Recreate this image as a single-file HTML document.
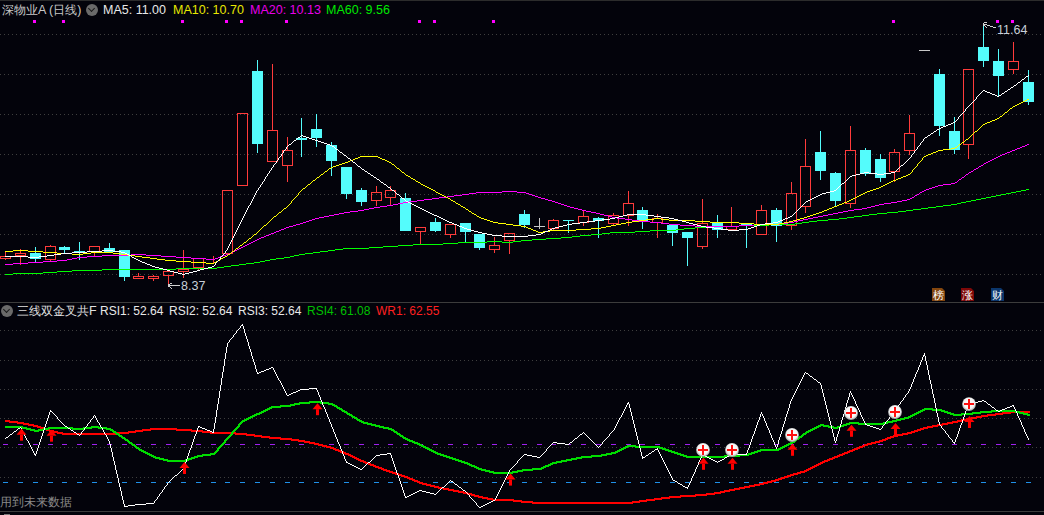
<!DOCTYPE html>
<html><head><meta charset="utf-8">
<style>
html,body{margin:0;padding:0;background:#03030b;}
#wrap{position:relative;width:1044px;height:515px;overflow:hidden;background:#03030b;font-family:"Liberation Sans",sans-serif;}
svg{position:absolute;left:0;top:0;}
.t{position:absolute;white-space:nowrap;font-size:12.5px;line-height:14px;}
.ic{position:absolute;width:12px;height:12px;border-radius:50%;background:#6a6a6a;}
.ic:after{content:"";position:absolute;left:3px;top:2px;width:4px;height:4px;border-right:1.5px solid #1a1a1a;border-bottom:1.5px solid #1a1a1a;transform:rotate(45deg);}
.cj{font-size:11.5px;}
.bx{position:absolute;width:13px;height:13px;color:#fff;font-size:11px;line-height:14px;text-align:center;clip-path:polygon(0 0,10px 0,13px 3px,13px 13px,0 13px);}
</style></head><body><div id="wrap">
<svg width="1044" height="515" viewBox="0 0 1044 515">
<defs><radialGradient id="cg" cx="50%" cy="45%" r="55%"><stop offset="0" stop-color="#ffffff"/><stop offset="0.7" stop-color="#f4f4f4"/><stop offset="1" stop-color="#9a9a9a"/></radialGradient></defs>
<line x1="0" y1="34.5" x2="1044" y2="34.5" stroke="#3e3e3e" stroke-width="1" stroke-dasharray="1 3"/>
<line x1="0" y1="74.5" x2="1044" y2="74.5" stroke="#3e3e3e" stroke-width="1" stroke-dasharray="1 3"/>
<line x1="0" y1="114.5" x2="1044" y2="114.5" stroke="#3e3e3e" stroke-width="1" stroke-dasharray="1 3"/>
<line x1="0" y1="154.5" x2="1044" y2="154.5" stroke="#3e3e3e" stroke-width="1" stroke-dasharray="1 3"/>
<line x1="0" y1="194.5" x2="1044" y2="194.5" stroke="#3e3e3e" stroke-width="1" stroke-dasharray="1 3"/>
<line x1="0" y1="234.5" x2="1044" y2="234.5" stroke="#3e3e3e" stroke-width="1" stroke-dasharray="1 3"/>
<line x1="0" y1="274.5" x2="1044" y2="274.5" stroke="#3e3e3e" stroke-width="1" stroke-dasharray="1 3"/>
<line x1="0" y1="330.5" x2="1044" y2="330.5" stroke="#3e3e3e" stroke-width="1" stroke-dasharray="1 3"/>
<line x1="0" y1="360.5" x2="1044" y2="360.5" stroke="#3e3e3e" stroke-width="1" stroke-dasharray="1 3"/>
<line x1="0" y1="389.5" x2="1044" y2="389.5" stroke="#3e3e3e" stroke-width="1" stroke-dasharray="1 3"/>
<line x1="0" y1="418.5" x2="1044" y2="418.5" stroke="#3e3e3e" stroke-width="1" stroke-dasharray="1 3"/>
<line x1="0" y1="447.5" x2="1044" y2="447.5" stroke="#3e3e3e" stroke-width="1" stroke-dasharray="1 3"/>
<line x1="0" y1="477.5" x2="1044" y2="477.5" stroke="#3e3e3e" stroke-width="1" stroke-dasharray="1 3"/>
<rect x="0" y="0" width="1044" height="1" fill="#2c2c2c"/>
<rect x="0" y="302" width="1044" height="1" fill="#3c3c3c"/>
<rect x="0" y="511" width="1044" height="1" fill="#3c3c3c"/>
<rect x="4" y="514" width="6" height="1" fill="#7a7a7a"/>
<rect x="5" y="252" width="1" height="4" fill="#ff3b3b"/>
<rect x="5" y="259" width="1" height="1" fill="#ff3b3b"/>
<rect x="0.5" y="256.5" width="10" height="2" fill="none" stroke="#ff3b3b" stroke-width="1"/>
<rect x="20" y="249" width="1" height="4" fill="#ff3b3b"/>
<rect x="20" y="256" width="1" height="9" fill="#ff3b3b"/>
<rect x="15.5" y="253.5" width="10" height="2" fill="none" stroke="#ff3b3b" stroke-width="1"/>
<rect x="35" y="247" width="1" height="6" fill="#54fcfc"/>
<rect x="35" y="259" width="1" height="3" fill="#54fcfc"/>
<rect x="30" y="253" width="11" height="6" fill="#54fcfc"/>
<rect x="50" y="245" width="1" height="1" fill="#ff3b3b"/>
<rect x="50" y="260" width="1" height="2" fill="#ff3b3b"/>
<rect x="45.5" y="246.5" width="10" height="13" fill="none" stroke="#ff3b3b" stroke-width="1"/>
<rect x="64" y="246" width="1" height="1" fill="#54fcfc"/>
<rect x="64" y="250" width="1" height="3" fill="#54fcfc"/>
<rect x="59" y="247" width="11" height="3" fill="#54fcfc"/>
<rect x="79" y="242" width="1" height="9" fill="#54fcfc"/>
<rect x="79" y="252" width="1" height="8" fill="#54fcfc"/>
<rect x="74" y="251" width="11" height="1" fill="#54fcfc"/>
<rect x="94" y="252" width="1" height="4" fill="#ff3b3b"/>
<rect x="89.5" y="246.5" width="10" height="5" fill="none" stroke="#ff3b3b" stroke-width="1"/>
<rect x="109" y="243" width="1" height="5" fill="#54fcfc"/>
<rect x="109" y="252" width="1" height="1" fill="#54fcfc"/>
<rect x="104" y="248" width="11" height="4" fill="#54fcfc"/>
<rect x="124" y="277" width="1" height="4" fill="#54fcfc"/>
<rect x="119" y="250" width="11" height="27" fill="#54fcfc"/>
<rect x="138" y="273" width="1" height="3" fill="#ff3b3b"/>
<rect x="133.5" y="276.5" width="10" height="2" fill="none" stroke="#ff3b3b" stroke-width="1"/>
<rect x="153" y="275" width="1" height="1" fill="#ff3b3b"/>
<rect x="153" y="279" width="1" height="2" fill="#ff3b3b"/>
<rect x="148.5" y="276.5" width="10" height="2" fill="none" stroke="#ff3b3b" stroke-width="1"/>
<rect x="168" y="276" width="1" height="9" fill="#ff3b3b"/>
<rect x="163.5" y="271.5" width="10" height="4" fill="none" stroke="#ff3b3b" stroke-width="1"/>
<rect x="183" y="250" width="1" height="19" fill="#ff3b3b"/>
<rect x="183" y="272" width="1" height="6" fill="#ff3b3b"/>
<rect x="178.5" y="269.5" width="10" height="2" fill="none" stroke="#ff3b3b" stroke-width="1"/>
<rect x="198" y="268" width="1" height="2" fill="#ff3b3b"/>
<rect x="193.5" y="258.5" width="10" height="9" fill="none" stroke="#ff3b3b" stroke-width="1"/>
<rect x="213" y="256" width="1" height="3" fill="#ff3b3b"/>
<rect x="213" y="260" width="1" height="4" fill="#ff3b3b"/>
<rect x="208.5" y="259.5" width="10" height="0" fill="none" stroke="#ff3b3b" stroke-width="1"/>
<rect x="222.5" y="190.5" width="10" height="63" fill="none" stroke="#ff3b3b" stroke-width="1"/>
<rect x="237.5" y="113.5" width="10" height="72" fill="none" stroke="#ff3b3b" stroke-width="1"/>
<rect x="257" y="60" width="1" height="11" fill="#54fcfc"/>
<rect x="257" y="144" width="1" height="9" fill="#54fcfc"/>
<rect x="252" y="71" width="11" height="73" fill="#54fcfc"/>
<rect x="272" y="64" width="1" height="66" fill="#ff3b3b"/>
<rect x="267.5" y="130.5" width="10" height="31" fill="none" stroke="#ff3b3b" stroke-width="1"/>
<rect x="287" y="137" width="1" height="13" fill="#ff3b3b"/>
<rect x="287" y="166" width="1" height="16" fill="#ff3b3b"/>
<rect x="282.5" y="150.5" width="10" height="15" fill="none" stroke="#ff3b3b" stroke-width="1"/>
<rect x="301" y="118" width="1" height="20" fill="#54fcfc"/>
<rect x="301" y="140" width="1" height="17" fill="#54fcfc"/>
<rect x="296" y="138" width="11" height="2" fill="#54fcfc"/>
<rect x="316" y="114" width="1" height="15" fill="#54fcfc"/>
<rect x="316" y="138" width="1" height="9" fill="#54fcfc"/>
<rect x="311" y="129" width="11" height="9" fill="#54fcfc"/>
<rect x="331" y="142" width="1" height="3" fill="#54fcfc"/>
<rect x="331" y="161" width="1" height="15" fill="#54fcfc"/>
<rect x="326" y="145" width="11" height="16" fill="#54fcfc"/>
<rect x="346" y="194" width="1" height="5" fill="#54fcfc"/>
<rect x="341" y="167" width="11" height="27" fill="#54fcfc"/>
<rect x="361" y="188" width="1" height="2" fill="#54fcfc"/>
<rect x="361" y="202" width="1" height="4" fill="#54fcfc"/>
<rect x="356" y="190" width="11" height="12" fill="#54fcfc"/>
<rect x="376" y="186" width="1" height="6" fill="#ff3b3b"/>
<rect x="376" y="201" width="1" height="5" fill="#ff3b3b"/>
<rect x="371.5" y="192.5" width="10" height="8" fill="none" stroke="#ff3b3b" stroke-width="1"/>
<rect x="390" y="186" width="1" height="4" fill="#ff3b3b"/>
<rect x="390" y="198" width="1" height="7" fill="#ff3b3b"/>
<rect x="385.5" y="190.5" width="10" height="7" fill="none" stroke="#ff3b3b" stroke-width="1"/>
<rect x="405" y="193" width="1" height="5" fill="#54fcfc"/>
<rect x="400" y="198" width="11" height="33" fill="#54fcfc"/>
<rect x="420" y="232" width="1" height="12" fill="#ff3b3b"/>
<rect x="415.5" y="227.5" width="10" height="4" fill="none" stroke="#ff3b3b" stroke-width="1"/>
<rect x="435" y="218" width="1" height="4" fill="#54fcfc"/>
<rect x="435" y="231" width="1" height="1" fill="#54fcfc"/>
<rect x="430" y="222" width="11" height="9" fill="#54fcfc"/>
<rect x="450" y="235" width="1" height="3" fill="#ff3b3b"/>
<rect x="445.5" y="224.5" width="10" height="10" fill="none" stroke="#ff3b3b" stroke-width="1"/>
<rect x="465" y="232" width="1" height="10" fill="#54fcfc"/>
<rect x="460" y="223" width="11" height="9" fill="#54fcfc"/>
<rect x="479" y="248" width="1" height="2" fill="#54fcfc"/>
<rect x="474" y="234" width="11" height="14" fill="#54fcfc"/>
<rect x="494" y="237" width="1" height="8" fill="#ff3b3b"/>
<rect x="494" y="250" width="1" height="3" fill="#ff3b3b"/>
<rect x="489.5" y="245.5" width="10" height="4" fill="none" stroke="#ff3b3b" stroke-width="1"/>
<rect x="509" y="241" width="1" height="13" fill="#ff3b3b"/>
<rect x="504.5" y="233.5" width="10" height="7" fill="none" stroke="#ff3b3b" stroke-width="1"/>
<rect x="524" y="210" width="1" height="4" fill="#54fcfc"/>
<rect x="524" y="225" width="1" height="3" fill="#54fcfc"/>
<rect x="519" y="214" width="11" height="11" fill="#54fcfc"/>
<rect x="534" y="226" width="11" height="1" fill="#c8c8c8"/>
<rect x="539" y="218" width="1" height="11" fill="#c8c8c8"/>
<rect x="553" y="219" width="1" height="1" fill="#ff3b3b"/>
<rect x="553" y="229" width="1" height="1" fill="#ff3b3b"/>
<rect x="548.5" y="220.5" width="10" height="8" fill="none" stroke="#ff3b3b" stroke-width="1"/>
<rect x="568" y="221" width="1" height="12" fill="#54fcfc"/>
<rect x="563" y="220" width="11" height="1" fill="#54fcfc"/>
<rect x="583" y="211" width="1" height="5" fill="#ff3b3b"/>
<rect x="583" y="223" width="1" height="3" fill="#ff3b3b"/>
<rect x="578.5" y="216.5" width="10" height="6" fill="none" stroke="#ff3b3b" stroke-width="1"/>
<rect x="598" y="217" width="1" height="1" fill="#54fcfc"/>
<rect x="598" y="221" width="1" height="17" fill="#54fcfc"/>
<rect x="593" y="218" width="11" height="3" fill="#54fcfc"/>
<rect x="613" y="213" width="1" height="2" fill="#ff3b3b"/>
<rect x="613" y="224" width="1" height="1" fill="#ff3b3b"/>
<rect x="608.5" y="215.5" width="10" height="8" fill="none" stroke="#ff3b3b" stroke-width="1"/>
<rect x="628" y="191" width="1" height="12" fill="#ff3b3b"/>
<rect x="628" y="216" width="1" height="10" fill="#ff3b3b"/>
<rect x="623.5" y="203.5" width="10" height="12" fill="none" stroke="#ff3b3b" stroke-width="1"/>
<rect x="642" y="207" width="1" height="3" fill="#54fcfc"/>
<rect x="642" y="221" width="1" height="8" fill="#54fcfc"/>
<rect x="637" y="210" width="11" height="11" fill="#54fcfc"/>
<rect x="657" y="214" width="1" height="4" fill="#ff3b3b"/>
<rect x="657" y="223" width="1" height="15" fill="#ff3b3b"/>
<rect x="652.5" y="218.5" width="10" height="4" fill="none" stroke="#ff3b3b" stroke-width="1"/>
<rect x="672" y="233" width="1" height="13" fill="#54fcfc"/>
<rect x="667" y="225" width="11" height="8" fill="#54fcfc"/>
<rect x="687" y="238" width="1" height="28" fill="#54fcfc"/>
<rect x="682" y="232" width="11" height="6" fill="#54fcfc"/>
<rect x="702" y="199" width="1" height="24" fill="#ff3b3b"/>
<rect x="702" y="247" width="1" height="2" fill="#ff3b3b"/>
<rect x="697.5" y="223.5" width="10" height="23" fill="none" stroke="#ff3b3b" stroke-width="1"/>
<rect x="717" y="215" width="1" height="8" fill="#54fcfc"/>
<rect x="717" y="230" width="1" height="8" fill="#54fcfc"/>
<rect x="712" y="223" width="11" height="7" fill="#54fcfc"/>
<rect x="731" y="207" width="1" height="19" fill="#ff3b3b"/>
<rect x="731" y="230" width="1" height="1" fill="#ff3b3b"/>
<rect x="726.5" y="226.5" width="10" height="3" fill="none" stroke="#ff3b3b" stroke-width="1"/>
<rect x="746" y="226" width="1" height="22" fill="#54fcfc"/>
<rect x="741" y="224" width="11" height="2" fill="#54fcfc"/>
<rect x="761" y="205" width="1" height="5" fill="#ff3b3b"/>
<rect x="756.5" y="210.5" width="10" height="24" fill="none" stroke="#ff3b3b" stroke-width="1"/>
<rect x="776" y="208" width="1" height="2" fill="#54fcfc"/>
<rect x="776" y="226" width="1" height="16" fill="#54fcfc"/>
<rect x="771" y="210" width="11" height="16" fill="#54fcfc"/>
<rect x="791" y="182" width="1" height="11" fill="#ff3b3b"/>
<rect x="791" y="226" width="1" height="4" fill="#ff3b3b"/>
<rect x="786.5" y="193.5" width="10" height="32" fill="none" stroke="#ff3b3b" stroke-width="1"/>
<rect x="805" y="139" width="1" height="27" fill="#ff3b3b"/>
<rect x="805" y="207" width="1" height="6" fill="#ff3b3b"/>
<rect x="800.5" y="166.5" width="10" height="40" fill="none" stroke="#ff3b3b" stroke-width="1"/>
<rect x="820" y="131" width="1" height="21" fill="#54fcfc"/>
<rect x="820" y="171" width="1" height="9" fill="#54fcfc"/>
<rect x="815" y="152" width="11" height="19" fill="#54fcfc"/>
<rect x="835" y="172" width="1" height="1" fill="#54fcfc"/>
<rect x="835" y="201" width="1" height="5" fill="#54fcfc"/>
<rect x="830" y="173" width="11" height="28" fill="#54fcfc"/>
<rect x="850" y="126" width="1" height="24" fill="#ff3b3b"/>
<rect x="850" y="204" width="1" height="4" fill="#ff3b3b"/>
<rect x="845.5" y="150.5" width="10" height="53" fill="none" stroke="#ff3b3b" stroke-width="1"/>
<rect x="865" y="148" width="1" height="2" fill="#54fcfc"/>
<rect x="865" y="174" width="1" height="2" fill="#54fcfc"/>
<rect x="860" y="150" width="11" height="24" fill="#54fcfc"/>
<rect x="880" y="154" width="1" height="5" fill="#54fcfc"/>
<rect x="880" y="178" width="1" height="4" fill="#54fcfc"/>
<rect x="875" y="159" width="11" height="19" fill="#54fcfc"/>
<rect x="894" y="149" width="1" height="3" fill="#ff3b3b"/>
<rect x="894" y="172" width="1" height="10" fill="#ff3b3b"/>
<rect x="889.5" y="152.5" width="10" height="19" fill="none" stroke="#ff3b3b" stroke-width="1"/>
<rect x="909" y="115" width="1" height="18" fill="#ff3b3b"/>
<rect x="909" y="151" width="1" height="4" fill="#ff3b3b"/>
<rect x="904.5" y="133.5" width="10" height="17" fill="none" stroke="#ff3b3b" stroke-width="1"/>
<rect x="919" y="50" width="11" height="1" fill="#c8c8c8"/>
<rect x="939" y="69" width="1" height="5" fill="#54fcfc"/>
<rect x="939" y="126" width="1" height="10" fill="#54fcfc"/>
<rect x="934" y="74" width="11" height="52" fill="#54fcfc"/>
<rect x="954" y="117" width="1" height="14" fill="#54fcfc"/>
<rect x="954" y="150" width="1" height="4" fill="#54fcfc"/>
<rect x="949" y="131" width="11" height="19" fill="#54fcfc"/>
<rect x="968" y="145" width="1" height="14" fill="#ff3b3b"/>
<rect x="963.5" y="69.5" width="10" height="75" fill="none" stroke="#ff3b3b" stroke-width="1"/>
<rect x="983" y="24" width="1" height="23" fill="#54fcfc"/>
<rect x="983" y="61" width="1" height="6" fill="#54fcfc"/>
<rect x="978" y="47" width="11" height="14" fill="#54fcfc"/>
<rect x="998" y="49" width="1" height="12" fill="#54fcfc"/>
<rect x="998" y="76" width="1" height="20" fill="#54fcfc"/>
<rect x="993" y="61" width="11" height="15" fill="#54fcfc"/>
<rect x="1013" y="42" width="1" height="19" fill="#ff3b3b"/>
<rect x="1013" y="70" width="1" height="4" fill="#ff3b3b"/>
<rect x="1008.5" y="61.5" width="10" height="8" fill="none" stroke="#ff3b3b" stroke-width="1"/>
<rect x="1028" y="70" width="1" height="12" fill="#54fcfc"/>
<rect x="1028" y="102" width="1" height="3" fill="#54fcfc"/>
<rect x="1023" y="82" width="11" height="20" fill="#54fcfc"/>
<path d="M1026 189h3v1h-3zM1021 190h5v1h-5zM1016 191h5v1h-5zM1011 192h5v1h-5zM1006 193h5v1h-5zM1001 194h5v1h-5zM996 195h5v1h-5zM991 196h5v1h-5zM986 197h5v1h-5zM981 198h5v1h-5zM976 199h5v1h-5zM971 200h5v1h-5zM966 201h5v1h-5zM961 202h5v1h-5zM957 203h4v1h-4zM951 204h6v1h-6zM943 205h8v1h-8zM936 206h7v1h-7zM928 207h8v1h-8zM921 208h7v1h-7zM913 209h8v1h-8zM906 210h7v1h-7zM898 211h8v1h-8zM887 212h11v1h-11zM877 213h10v1h-10zM869 214h8v1h-8zM862 215h7v1h-7zM854 216h8v1h-8zM847 217h7v1h-7zM839 218h8v1h-8zM828 219h11v1h-11zM817 220h11v1h-11zM809 221h8v1h-8zM802 222h7v1h-7zM795 223h7v1h-7zM769 224h26v1h-26zM739 225h30v1h-30zM710 226h29v1h-29zM695 227h15v1h-15zM684 228h11v1h-11zM676 229h8v1h-8zM650 230h26v1h-26zM635 231h15v1h-15zM610 232h25v1h-25zM602 233h8v1h-8zM591 234h11v1h-11zM580 235h11v1h-11zM572 236h8v1h-8zM561 237h11v1h-11zM546 238h15v1h-15zM532 239h14v1h-14zM521 240h11v1h-11zM487 241h15v1h-15zM513 241h8v1h-8zM458 242h29v1h-29zM502 242h11v1h-11zM443 243h15v1h-15zM413 244h30v1h-30zM398 245h15v1h-15zM383 246h15v1h-15zM369 247h14v1h-14zM343 248h26v1h-26zM335 249h8v1h-8zM328 250h7v1h-7zM320 251h8v1h-8zM313 252h7v1h-7zM305 253h8v1h-8zM299 254h6v1h-6zM294 255h5v1h-5zM290 256h4v1h-4zM284 257h6v1h-6zM276 258h8v1h-8zM270 259h6v1h-6zM265 260h5v1h-5zM260 261h5v1h-5zM254 262h6v1h-6zM246 263h8v1h-8zM239 264h7v1h-7zM231 265h8v1h-8zM224 266h7v1h-7zM217 267h7v1h-7zM176 268h41v1h-41zM102 269h74v1h-74zM72 270h30v1h-30zM57 271h15v1h-15zM43 272h14v1h-14zM13 273h30v1h-30zM5 274h8v1h-8z" fill="#00ff00"/>
<path d="M1027 144h2v1h-2zM1025 145h2v1h-2zM1022 146h3v1h-3zM1020 147h2v1h-2zM1017 148h3v1h-3zM1015 149h2v1h-2zM1012 150h3v1h-3zM1010 151h2v1h-2zM1007 152h3v1h-3zM1005 153h2v1h-2zM1002 154h3v1h-3zM1000 155h2v1h-2zM998 156h2v1h-2zM996 157h2v1h-2zM994 158h2v1h-2zM992 159h2v1h-2zM990 160h2v1h-2zM988 161h2v1h-2zM986 162h2v1h-2zM984 163h2v1h-2zM983 164h1v1h-1zM981 165h2v1h-2zM979 166h2v1h-2zM978 167h1v1h-1zM976 168h2v1h-2zM974 169h2v1h-2zM973 170h1v1h-1zM971 171h2v1h-2zM969 172h2v1h-2zM968 173h1v1h-1zM966 174h2v1h-2zM965 175h1v1h-1zM964 176h1v1h-1zM962 177h2v1h-2zM961 178h1v1h-1zM959 179h2v1h-2zM958 180h1v1h-1zM957 181h1v1h-1zM955 182h2v1h-2zM951 183h4v1h-4zM943 184h8v1h-8zM938 185h5v1h-5zM935 186h3v1h-3zM932 187h3v1h-3zM929 188h3v1h-3zM926 189h3v1h-3zM924 190h2v1h-2zM502 191h15v1h-15zM922 191h2v1h-2zM476 192h26v1h-26zM517 192h9v1h-9zM920 192h2v1h-2zM469 193h7v1h-7zM526 193h3v1h-3zM919 193h1v1h-1zM462 194h7v1h-7zM529 194h3v1h-3zM917 194h2v1h-2zM454 195h8v1h-8zM532 195h3v1h-3zM915 195h2v1h-2zM447 196h7v1h-7zM535 196h3v1h-3zM914 196h1v1h-1zM439 197h8v1h-8zM538 197h3v1h-3zM912 197h2v1h-2zM432 198h7v1h-7zM541 198h4v1h-4zM910 198h2v1h-2zM424 199h8v1h-8zM545 199h3v1h-3zM907 199h3v1h-3zM417 200h7v1h-7zM548 200h4v1h-4zM902 200h5v1h-5zM409 201h8v1h-8zM552 201h3v1h-3zM897 201h5v1h-5zM403 202h6v1h-6zM555 202h3v1h-3zM891 202h6v1h-6zM398 203h5v1h-5zM558 203h3v1h-3zM884 203h7v1h-7zM393 204h5v1h-5zM561 204h3v1h-3zM879 204h5v1h-5zM387 205h6v1h-6zM564 205h3v1h-3zM875 205h4v1h-4zM380 206h7v1h-7zM567 206h3v1h-3zM871 206h4v1h-4zM374 207h6v1h-6zM570 207h4v1h-4zM867 207h4v1h-4zM369 208h5v1h-5zM574 208h4v1h-4zM862 208h5v1h-5zM364 209h5v1h-5zM578 209h4v1h-4zM854 209h8v1h-8zM358 210h6v1h-6zM582 210h4v1h-4zM848 210h6v1h-6zM350 211h8v1h-8zM586 211h5v1h-5zM843 211h5v1h-5zM344 212h6v1h-6zM591 212h5v1h-5zM838 212h5v1h-5zM339 213h5v1h-5zM596 213h4v1h-4zM833 213h5v1h-5zM334 214h5v1h-5zM600 214h4v1h-4zM828 214h5v1h-5zM329 215h5v1h-5zM604 215h4v1h-4zM823 215h5v1h-5zM324 216h5v1h-5zM608 216h4v1h-4zM818 216h5v1h-5zM319 217h5v1h-5zM612 217h5v1h-5zM813 217h5v1h-5zM315 218h4v1h-4zM617 218h8v1h-8zM808 218h5v1h-5zM312 219h3v1h-3zM625 219h7v1h-7zM803 219h5v1h-5zM309 220h3v1h-3zM632 220h7v1h-7zM798 220h5v1h-5zM306 221h3v1h-3zM639 221h11v1h-11zM794 221h4v1h-4zM303 222h3v1h-3zM650 222h11v1h-11zM788 222h6v1h-6zM300 223h3v1h-3zM661 223h8v1h-8zM780 223h8v1h-8zM296 224h4v1h-4zM669 224h11v1h-11zM754 224h26v1h-26zM293 225h3v1h-3zM680 225h15v1h-15zM739 225h15v1h-15zM289 226h4v1h-4zM695 226h44v1h-44zM286 227h3v1h-3zM284 228h2v1h-2zM281 229h3v1h-3zM279 230h2v1h-2zM276 231h3v1h-3zM274 232h2v1h-2zM271 233h3v1h-3zM269 234h2v1h-2zM266 235h3v1h-3zM264 236h2v1h-2zM261 237h3v1h-3zM259 238h2v1h-2zM257 239h2v1h-2zM255 240h2v1h-2zM253 241h2v1h-2zM251 242h2v1h-2zM249 243h2v1h-2zM247 244h2v1h-2zM245 245h2v1h-2zM243 246h2v1h-2zM241 247h2v1h-2zM239 248h2v1h-2zM237 249h2v1h-2zM235 250h2v1h-2zM233 251h2v1h-2zM231 252h2v1h-2zM229 253h2v1h-2zM131 254h15v1h-15zM226 254h3v1h-3zM102 255h29v1h-29zM146 255h15v1h-15zM223 255h3v1h-3zM87 256h15v1h-15zM161 256h15v1h-15zM220 256h3v1h-3zM77 257h10v1h-10zM176 257h15v1h-15zM218 257h2v1h-2zM72 258h5v1h-5zM191 258h15v1h-15zM215 258h3v1h-3zM67 259h5v1h-5zM206 259h9v1h-9zM57 260h10v1h-10zM43 261h14v1h-14zM28 262h15v1h-15zM13 263h15v1h-15zM5 264h8v1h-8z" fill="#ff00ff"/>
<path d="M1027 99h2v1h-2zM1025 100h2v1h-2zM1023 101h2v1h-2zM1021 102h2v1h-2zM1019 103h2v1h-2zM1017 104h2v1h-2zM1015 105h2v1h-2zM1013 106h2v1h-2zM1012 107h1v1h-1zM1010 108h2v1h-2zM1009 109h1v1h-1zM1008 110h1v1h-1zM1007 111h1v1h-1zM1005 112h2v1h-2zM1004 113h1v1h-1zM1003 114h1v1h-1zM1002 115h1v1h-1zM1000 116h2v1h-2zM999 117h1v1h-1zM997 118h2v1h-2zM995 119h2v1h-2zM992 120h3v1h-3zM990 121h2v1h-2zM987 122h3v1h-3zM985 123h2v1h-2zM983 124h2v1h-2zM982 125h1v1h-1zM981 126h1v1h-1zM980 127h1v1h-1zM979 128h1v1h-1zM978 129h1v1h-1zM977 130h1v1h-1zM975 131h2v1h-2zM974 132h1v1h-1zM973 133h1v1h-1zM972 134h1v1h-1zM971 135h1v1h-1zM970 136h1v1h-1zM969 137h1v1h-1zM968 138h1v1h-1zM966 139h2v1h-2zM965 140h1v1h-1zM964 141h1v1h-1zM962 142h2v1h-2zM961 143h1v1h-1zM959 144h2v1h-2zM958 145h1v1h-1zM957 146h1v1h-1zM955 147h2v1h-2zM951 148h4v1h-4zM943 149h8v1h-8zM938 150h5v1h-5zM936 151h2v1h-2zM933 152h3v1h-3zM931 153h2v1h-2zM928 154h3v1h-3zM926 155h2v1h-2zM360 156h18v1h-18zM924 156h2v1h-2zM358 157h2v1h-2zM378 157h2v1h-2zM923 157h1v1h-1zM355 158h3v1h-3zM380 158h2v1h-2zM922 158h1v1h-1zM353 159h2v1h-2zM382 159h3v1h-3zM922 159h1v1h-1zM350 160h3v1h-3zM385 160h2v1h-2zM921 160h1v1h-1zM348 161h2v1h-2zM387 161h2v1h-2zM920 161h1v1h-1zM345 162h3v1h-3zM389 162h2v1h-2zM919 162h1v1h-1zM342 163h3v1h-3zM391 163h1v1h-1zM918 163h1v1h-1zM339 164h3v1h-3zM392 164h2v1h-2zM917 164h1v1h-1zM336 165h3v1h-3zM394 165h1v1h-1zM917 165h1v1h-1zM333 166h3v1h-3zM395 166h1v1h-1zM916 166h1v1h-1zM331 167h2v1h-2zM396 167h1v1h-1zM915 167h1v1h-1zM329 168h2v1h-2zM397 168h2v1h-2zM914 168h1v1h-1zM328 169h1v1h-1zM399 169h1v1h-1zM913 169h1v1h-1zM327 170h1v1h-1zM400 170h1v1h-1zM912 170h1v1h-1zM325 171h2v1h-2zM401 171h1v1h-1zM912 171h1v1h-1zM324 172h1v1h-1zM402 172h2v1h-2zM911 172h1v1h-1zM323 173h1v1h-1zM404 173h1v1h-1zM910 173h1v1h-1zM321 174h2v1h-2zM405 174h1v1h-1zM908 174h2v1h-2zM320 175h1v1h-1zM406 175h2v1h-2zM906 175h2v1h-2zM319 176h1v1h-1zM408 176h2v1h-2zM903 176h3v1h-3zM317 177h2v1h-2zM410 177h1v1h-1zM901 177h2v1h-2zM316 178h1v1h-1zM411 178h2v1h-2zM898 178h3v1h-3zM315 179h1v1h-1zM413 179h2v1h-2zM896 179h2v1h-2zM313 180h2v1h-2zM415 180h1v1h-1zM893 180h3v1h-3zM312 181h1v1h-1zM416 181h2v1h-2zM891 181h2v1h-2zM311 182h1v1h-1zM418 182h2v1h-2zM889 182h2v1h-2zM310 183h1v1h-1zM420 183h1v1h-1zM887 183h2v1h-2zM308 184h2v1h-2zM421 184h2v1h-2zM885 184h2v1h-2zM307 185h1v1h-1zM423 185h2v1h-2zM883 185h2v1h-2zM306 186h1v1h-1zM425 186h2v1h-2zM881 186h2v1h-2zM305 187h1v1h-1zM427 187h2v1h-2zM879 187h2v1h-2zM303 188h2v1h-2zM429 188h2v1h-2zM876 188h3v1h-3zM302 189h1v1h-1zM431 189h2v1h-2zM873 189h3v1h-3zM301 190h1v1h-1zM433 190h2v1h-2zM870 190h3v1h-3zM300 191h1v1h-1zM435 191h1v1h-1zM867 191h3v1h-3zM299 192h1v1h-1zM436 192h2v1h-2zM865 192h2v1h-2zM298 193h1v1h-1zM438 193h2v1h-2zM863 193h2v1h-2zM298 194h1v1h-1zM440 194h2v1h-2zM861 194h2v1h-2zM297 195h1v1h-1zM442 195h2v1h-2zM859 195h2v1h-2zM296 196h1v1h-1zM444 196h2v1h-2zM857 196h2v1h-2zM295 197h1v1h-1zM446 197h2v1h-2zM855 197h2v1h-2zM294 198h1v1h-1zM448 198h2v1h-2zM853 198h2v1h-2zM293 199h1v1h-1zM450 199h1v1h-1zM851 199h2v1h-2zM292 200h1v1h-1zM451 200h2v1h-2zM849 200h2v1h-2zM291 201h1v1h-1zM453 201h2v1h-2zM847 201h2v1h-2zM291 202h1v1h-1zM455 202h1v1h-1zM844 202h3v1h-3zM290 203h1v1h-1zM456 203h2v1h-2zM842 203h2v1h-2zM289 204h1v1h-1zM458 204h2v1h-2zM839 204h3v1h-3zM288 205h1v1h-1zM460 205h1v1h-1zM837 205h2v1h-2zM287 206h1v1h-1zM461 206h2v1h-2zM834 206h3v1h-3zM286 207h1v1h-1zM463 207h2v1h-2zM832 207h2v1h-2zM284 208h2v1h-2zM465 208h1v1h-1zM829 208h3v1h-3zM283 209h1v1h-1zM466 209h2v1h-2zM827 209h2v1h-2zM282 210h1v1h-1zM468 210h1v1h-1zM824 210h3v1h-3zM281 211h1v1h-1zM469 211h2v1h-2zM822 211h2v1h-2zM279 212h2v1h-2zM471 212h1v1h-1zM819 212h3v1h-3zM278 213h1v1h-1zM472 213h2v1h-2zM816 213h3v1h-3zM277 214h1v1h-1zM474 214h2v1h-2zM813 214h3v1h-3zM276 215h1v1h-1zM476 215h1v1h-1zM810 215h3v1h-3zM274 216h2v1h-2zM477 216h2v1h-2zM807 216h3v1h-3zM273 217h1v1h-1zM479 217h2v1h-2zM804 217h3v1h-3zM272 218h1v1h-1zM481 218h3v1h-3zM654 218h7v1h-7zM800 218h4v1h-4zM271 219h1v1h-1zM484 219h3v1h-3zM646 219h8v1h-8zM661 219h8v1h-8zM797 219h3v1h-3zM270 220h1v1h-1zM487 220h3v1h-3zM639 220h7v1h-7zM669 220h26v1h-26zM793 220h4v1h-4zM269 221h1v1h-1zM490 221h3v1h-3zM632 221h7v1h-7zM695 221h15v1h-15zM789 221h4v1h-4zM268 222h1v1h-1zM493 222h5v1h-5zM626 222h6v1h-6zM710 222h29v1h-29zM784 222h5v1h-5zM267 223h1v1h-1zM498 223h8v1h-8zM621 223h5v1h-5zM739 223h15v1h-15zM779 223h5v1h-5zM266 224h1v1h-1zM506 224h7v1h-7zM616 224h5v1h-5zM754 224h25v1h-25zM264 225h2v1h-2zM513 225h8v1h-8zM611 225h5v1h-5zM263 226h1v1h-1zM521 226h5v1h-5zM606 226h5v1h-5zM262 227h1v1h-1zM526 227h2v1h-2zM601 227h5v1h-5zM261 228h1v1h-1zM528 228h3v1h-3zM591 228h10v1h-10zM260 229h1v1h-1zM531 229h2v1h-2zM576 229h15v1h-15zM259 230h1v1h-1zM533 230h3v1h-3zM550 230h26v1h-26zM258 231h1v1h-1zM536 231h2v1h-2zM543 231h7v1h-7zM257 232h1v1h-1zM538 232h5v1h-5zM256 233h1v1h-1zM254 234h2v1h-2zM253 235h1v1h-1zM252 236h1v1h-1zM251 237h1v1h-1zM249 238h2v1h-2zM248 239h1v1h-1zM247 240h1v1h-1zM246 241h1v1h-1zM244 242h2v1h-2zM243 243h1v1h-1zM242 244h1v1h-1zM240 245h2v1h-2zM239 246h1v1h-1zM238 247h1v1h-1zM236 248h2v1h-2zM235 249h1v1h-1zM13 250h15v1h-15zM234 250h1v1h-1zM5 251h8v1h-8zM28 251h15v1h-15zM232 251h2v1h-2zM43 252h14v1h-14zM91 252h22v1h-22zM231 252h1v1h-1zM57 253h15v1h-15zM83 253h8v1h-8zM113 253h8v1h-8zM230 253h1v1h-1zM72 254h11v1h-11zM121 254h7v1h-7zM228 254h2v1h-2zM128 255h7v1h-7zM227 255h1v1h-1zM135 256h7v1h-7zM225 256h2v1h-2zM142 257h8v1h-8zM223 257h2v1h-2zM150 258h7v1h-7zM221 258h2v1h-2zM157 259h8v1h-8zM220 259h1v1h-1zM165 260h11v1h-11zM218 260h2v1h-2zM176 261h15v1h-15zM216 261h2v1h-2zM191 262h15v1h-15zM214 262h2v1h-2zM206 263h8v1h-8z" fill="#ffff00"/>
<path d="M1028 75h1v1h-1zM1026 76h2v1h-2zM1025 77h1v1h-1zM1024 78h1v1h-1zM1022 79h2v1h-2zM1021 80h1v1h-1zM1020 81h1v1h-1zM1018 82h2v1h-2zM1017 83h1v1h-1zM1016 84h1v1h-1zM1014 85h2v1h-2zM1013 86h1v1h-1zM1011 87h2v1h-2zM1010 88h1v1h-1zM1008 89h2v1h-2zM983 90h2v1h-2zM1007 90h1v1h-1zM982 91h1v1h-1zM985 91h2v1h-2zM1005 91h2v1h-2zM981 92h1v1h-1zM987 92h3v1h-3zM1004 92h1v1h-1zM980 93h1v1h-1zM990 93h2v1h-2zM1002 93h2v1h-2zM979 94h1v1h-1zM992 94h3v1h-3zM1001 94h1v1h-1zM978 95h1v1h-1zM995 95h2v1h-2zM999 95h2v1h-2zM977 96h1v1h-1zM997 96h2v1h-2zM976 97h1v1h-1zM976 98h1v1h-1zM975 99h1v1h-1zM974 100h1v1h-1zM973 101h1v1h-1zM972 102h1v1h-1zM971 103h1v1h-1zM970 104h1v1h-1zM969 105h1v1h-1zM968 106h1v1h-1zM967 107h1v1h-1zM966 108h1v1h-1zM965 109h1v1h-1zM965 110h1v1h-1zM964 111h1v1h-1zM963 112h1v1h-1zM962 113h1v1h-1zM961 114h1v1h-1zM960 115h1v1h-1zM959 116h1v1h-1zM958 117h1v1h-1zM958 118h1v1h-1zM957 119h1v1h-1zM956 120h1v1h-1zM955 121h1v1h-1zM953 122h2v1h-2zM951 123h2v1h-2zM948 124h3v1h-3zM946 125h2v1h-2zM943 126h3v1h-3zM941 127h2v1h-2zM939 128h2v1h-2zM937 129h2v1h-2zM936 130h1v1h-1zM934 131h2v1h-2zM933 132h1v1h-1zM931 133h2v1h-2zM930 134h1v1h-1zM301 135h2v1h-2zM928 135h2v1h-2zM300 136h1v1h-1zM303 136h3v1h-3zM927 136h1v1h-1zM298 137h2v1h-2zM306 137h3v1h-3zM925 137h2v1h-2zM297 138h1v1h-1zM309 138h3v1h-3zM924 138h1v1h-1zM296 139h1v1h-1zM312 139h3v1h-3zM923 139h1v1h-1zM294 140h2v1h-2zM315 140h3v1h-3zM923 140h1v1h-1zM293 141h1v1h-1zM318 141h3v1h-3zM922 141h1v1h-1zM292 142h1v1h-1zM321 142h3v1h-3zM921 142h1v1h-1zM291 143h1v1h-1zM324 143h3v1h-3zM920 143h1v1h-1zM289 144h2v1h-2zM327 144h3v1h-3zM920 144h1v1h-1zM288 145h1v1h-1zM330 145h2v1h-2zM919 145h1v1h-1zM287 146h1v1h-1zM332 146h2v1h-2zM918 146h1v1h-1zM286 147h1v1h-1zM334 147h1v1h-1zM917 147h1v1h-1zM286 148h1v1h-1zM335 148h1v1h-1zM917 148h1v1h-1zM285 149h1v1h-1zM336 149h2v1h-2zM916 149h1v1h-1zM284 150h1v1h-1zM338 150h1v1h-1zM915 150h1v1h-1zM283 151h1v1h-1zM339 151h1v1h-1zM914 151h1v1h-1zM283 152h1v1h-1zM340 152h2v1h-2zM914 152h1v1h-1zM282 153h1v1h-1zM342 153h1v1h-1zM913 153h1v1h-1zM281 154h1v1h-1zM343 154h1v1h-1zM912 154h1v1h-1zM281 155h1v1h-1zM344 155h2v1h-2zM911 155h1v1h-1zM280 156h1v1h-1zM346 156h1v1h-1zM911 156h1v1h-1zM279 157h1v1h-1zM347 157h1v1h-1zM910 157h1v1h-1zM278 158h1v1h-1zM348 158h2v1h-2zM909 158h1v1h-1zM278 159h1v1h-1zM350 159h1v1h-1zM908 159h1v1h-1zM277 160h1v1h-1zM351 160h1v1h-1zM907 160h1v1h-1zM276 161h1v1h-1zM352 161h1v1h-1zM906 161h1v1h-1zM276 162h1v1h-1zM353 162h2v1h-2zM905 162h1v1h-1zM275 163h1v1h-1zM355 163h1v1h-1zM904 163h1v1h-1zM274 164h1v1h-1zM356 164h1v1h-1zM903 164h1v1h-1zM273 165h1v1h-1zM357 165h1v1h-1zM901 165h2v1h-2zM273 166h1v1h-1zM358 166h2v1h-2zM900 166h1v1h-1zM272 167h1v1h-1zM360 167h1v1h-1zM899 167h1v1h-1zM271 168h1v1h-1zM361 168h1v1h-1zM898 168h1v1h-1zM271 169h1v1h-1zM362 169h2v1h-2zM897 169h1v1h-1zM270 170h1v1h-1zM364 170h1v1h-1zM896 170h1v1h-1zM269 171h1v1h-1zM365 171h2v1h-2zM895 171h1v1h-1zM269 172h1v1h-1zM367 172h1v1h-1zM864 172h5v1h-5zM891 172h4v1h-4zM268 173h1v1h-1zM368 173h2v1h-2zM860 173h4v1h-4zM869 173h8v1h-8zM884 173h7v1h-7zM267 174h1v1h-1zM370 174h1v1h-1zM856 174h4v1h-4zM877 174h7v1h-7zM267 175h1v1h-1zM371 175h2v1h-2zM852 175h4v1h-4zM266 176h1v1h-1zM373 176h1v1h-1zM850 176h2v1h-2zM265 177h1v1h-1zM374 177h2v1h-2zM849 177h1v1h-1zM265 178h1v1h-1zM376 178h1v1h-1zM848 178h1v1h-1zM264 179h1v1h-1zM377 179h2v1h-2zM847 179h1v1h-1zM264 180h1v1h-1zM379 180h1v1h-1zM846 180h1v1h-1zM263 181h1v1h-1zM380 181h1v1h-1zM845 181h1v1h-1zM262 182h1v1h-1zM381 182h2v1h-2zM844 182h1v1h-1zM262 183h1v1h-1zM383 183h1v1h-1zM842 183h2v1h-2zM261 184h1v1h-1zM384 184h2v1h-2zM841 184h1v1h-1zM260 185h1v1h-1zM386 185h1v1h-1zM840 185h1v1h-1zM260 186h1v1h-1zM387 186h1v1h-1zM839 186h1v1h-1zM259 187h1v1h-1zM388 187h2v1h-2zM838 187h1v1h-1zM258 188h1v1h-1zM390 188h1v1h-1zM837 188h1v1h-1zM258 189h1v1h-1zM391 189h1v1h-1zM836 189h1v1h-1zM257 190h1v1h-1zM392 190h2v1h-2zM834 190h2v1h-2zM256 191h1v1h-1zM394 191h1v1h-1zM830 191h4v1h-4zM256 192h1v1h-1zM395 192h1v1h-1zM826 192h4v1h-4zM255 193h1v1h-1zM396 193h1v1h-1zM822 193h4v1h-4zM255 194h1v1h-1zM397 194h2v1h-2zM820 194h2v1h-2zM254 195h1v1h-1zM399 195h1v1h-1zM818 195h2v1h-2zM254 196h1v1h-1zM400 196h1v1h-1zM816 196h2v1h-2zM253 197h1v1h-1zM401 197h1v1h-1zM814 197h2v1h-2zM253 198h1v1h-1zM402 198h2v1h-2zM812 198h2v1h-2zM252 199h1v1h-1zM404 199h1v1h-1zM810 199h2v1h-2zM252 200h1v1h-1zM405 200h1v1h-1zM808 200h2v1h-2zM251 201h1v1h-1zM406 201h2v1h-2zM806 201h2v1h-2zM251 202h1v1h-1zM408 202h2v1h-2zM805 202h1v1h-1zM250 203h1v1h-1zM410 203h2v1h-2zM804 203h1v1h-1zM250 204h1v1h-1zM412 204h2v1h-2zM803 204h1v1h-1zM249 205h1v1h-1zM414 205h2v1h-2zM802 205h1v1h-1zM248 206h1v1h-1zM416 206h2v1h-2zM801 206h1v1h-1zM248 207h1v1h-1zM418 207h2v1h-2zM800 207h1v1h-1zM247 208h1v1h-1zM420 208h2v1h-2zM799 208h1v1h-1zM247 209h1v1h-1zM422 209h2v1h-2zM798 209h1v1h-1zM246 210h1v1h-1zM424 210h2v1h-2zM797 210h1v1h-1zM246 211h1v1h-1zM426 211h2v1h-2zM796 211h1v1h-1zM245 212h1v1h-1zM428 212h2v1h-2zM795 212h1v1h-1zM245 213h1v1h-1zM430 213h2v1h-2zM794 213h1v1h-1zM244 214h1v1h-1zM432 214h2v1h-2zM627 214h19v1h-19zM793 214h1v1h-1zM244 215h1v1h-1zM434 215h3v1h-3zM623 215h4v1h-4zM646 215h8v1h-8zM792 215h1v1h-1zM243 216h1v1h-1zM437 216h2v1h-2zM619 216h4v1h-4zM654 216h7v1h-7zM790 216h2v1h-2zM243 217h1v1h-1zM439 217h2v1h-2zM615 217h4v1h-4zM661 217h8v1h-8zM788 217h2v1h-2zM242 218h1v1h-1zM441 218h2v1h-2zM610 218h5v1h-5zM669 218h5v1h-5zM785 218h3v1h-3zM242 219h1v1h-1zM443 219h2v1h-2zM602 219h8v1h-8zM674 219h4v1h-4zM783 219h2v1h-2zM241 220h1v1h-1zM445 220h2v1h-2zM595 220h7v1h-7zM678 220h4v1h-4zM780 220h3v1h-3zM241 221h1v1h-1zM447 221h2v1h-2zM587 221h8v1h-8zM682 221h4v1h-4zM778 221h2v1h-2zM240 222h1v1h-1zM449 222h3v1h-3zM580 222h7v1h-7zM686 222h3v1h-3zM773 222h5v1h-5zM240 223h1v1h-1zM452 223h2v1h-2zM572 223h8v1h-8zM689 223h4v1h-4zM765 223h8v1h-8zM239 224h1v1h-1zM454 224h3v1h-3zM567 224h5v1h-5zM693 224h4v1h-4zM760 224h5v1h-5zM239 225h1v1h-1zM457 225h2v1h-2zM563 225h4v1h-4zM697 225h4v1h-4zM757 225h3v1h-3zM238 226h1v1h-1zM459 226h3v1h-3zM559 226h4v1h-4zM701 226h5v1h-5zM754 226h3v1h-3zM238 227h1v1h-1zM462 227h2v1h-2zM555 227h4v1h-4zM706 227h8v1h-8zM751 227h3v1h-3zM237 228h1v1h-1zM464 228h3v1h-3zM552 228h3v1h-3zM714 228h7v1h-7zM748 228h3v1h-3zM237 229h1v1h-1zM467 229h4v1h-4zM550 229h2v1h-2zM721 229h7v1h-7zM739 229h9v1h-9zM236 230h1v1h-1zM471 230h3v1h-3zM548 230h2v1h-2zM728 230h11v1h-11zM236 231h1v1h-1zM474 231h4v1h-4zM545 231h3v1h-3zM235 232h1v1h-1zM478 232h4v1h-4zM543 232h2v1h-2zM235 233h1v1h-1zM482 233h5v1h-5zM541 233h2v1h-2zM234 234h1v1h-1zM487 234h5v1h-5zM536 234h5v1h-5zM234 235h1v1h-1zM492 235h10v1h-10zM528 235h8v1h-8zM233 236h1v1h-1zM502 236h26v1h-26zM233 237h1v1h-1zM232 238h1v1h-1zM232 239h1v1h-1zM231 240h1v1h-1zM231 241h1v1h-1zM230 242h1v1h-1zM230 243h1v1h-1zM229 244h1v1h-1zM229 245h1v1h-1zM228 246h1v1h-1zM228 247h1v1h-1zM227 248h1v1h-1zM227 249h1v1h-1zM102 250h11v1h-11zM226 250h1v1h-1zM87 251h15v1h-15zM113 251h8v1h-8zM225 251h1v1h-1zM72 252h15v1h-15zM121 252h4v1h-4zM225 252h1v1h-1zM61 253h11v1h-11zM125 253h2v1h-2zM224 253h1v1h-1zM54 254h7v1h-7zM127 254h2v1h-2zM223 254h1v1h-1zM47 255h7v1h-7zM129 255h2v1h-2zM222 255h1v1h-1zM5 256h23v1h-23zM39 256h8v1h-8zM131 256h1v1h-1zM221 256h1v1h-1zM28 257h11v1h-11zM132 257h2v1h-2zM220 257h1v1h-1zM134 258h2v1h-2zM220 258h1v1h-1zM136 259h2v1h-2zM219 259h1v1h-1zM138 260h2v1h-2zM218 260h1v1h-1zM140 261h2v1h-2zM217 261h1v1h-1zM142 262h3v1h-3zM216 262h1v1h-1zM145 263h2v1h-2zM215 263h1v1h-1zM147 264h3v1h-3zM215 264h1v1h-1zM150 265h2v1h-2zM214 265h1v1h-1zM152 266h3v1h-3zM212 266h2v1h-2zM155 267h4v1h-4zM208 267h4v1h-4zM159 268h4v1h-4zM204 268h4v1h-4zM163 269h4v1h-4zM200 269h4v1h-4zM167 270h3v1h-3zM197 270h3v1h-3zM170 271h4v1h-4zM193 271h4v1h-4zM174 272h4v1h-4zM189 272h4v1h-4zM178 273h4v1h-4zM185 273h4v1h-4zM182 274h3v1h-3z" fill="#ffffff"/>
<rect x="33" y="20" width="3" height="3" fill="#ff00ff"/>
<rect x="62" y="20" width="3" height="3" fill="#ff00ff"/>
<rect x="181" y="20" width="3" height="3" fill="#ff00ff"/>
<rect x="225" y="20" width="3" height="3" fill="#ff00ff"/>
<rect x="240" y="20" width="3" height="3" fill="#ff00ff"/>
<rect x="285" y="20" width="3" height="3" fill="#ff00ff"/>
<rect x="418" y="20" width="3" height="3" fill="#ff00ff"/>
<rect x="433" y="20" width="3" height="3" fill="#ff00ff"/>
<rect x="492" y="20" width="3" height="3" fill="#ff00ff"/>
<rect x="892" y="20" width="3" height="3" fill="#ff00ff"/>
<rect x="996" y="20" width="3" height="3" fill="#ff00ff"/>
<rect x="1011" y="20" width="3" height="3" fill="#ff00ff"/>
<path d="M168 284h1v1h-1zM168 285h1v1h-1zM168 286h1v1h-1zM169 284h1v1h-1zM169 286h1v1h-1zM170 283h1v1h-1zM171 283h1v1h-1zM170 287h1v1h-1zM171 288h1v1h-1zM169 285h1v1h-1zM170 285h1v1h-1zM171 285h1v1h-1zM172 285h1v1h-1zM173 285h1v1h-1zM174 285h1v1h-1zM175 285h1v1h-1zM176 285h1v1h-1zM177 285h1v1h-1zM178 285h1v1h-1zM179 285h1v1h-1z" fill="#d0d0d0"/>
<text x="181" y="290" fill="#c8d0d8" font-size="12.5" font-family="Liberation Sans, sans-serif">8.37</text>
<path d="M983 23h1v1h-1zM983 24h1v1h-1zM983 25h1v1h-1zM984 22h1v1h-1zM985 22h1v1h-1zM986 22h1v1h-1zM984 25h1v1h-1zM985 26h1v1h-1zM986 27h1v1h-1zM984 24h1v1h-1zM985 24h1v1h-1zM986 24h1v1h-1zM987 25h1v1h-1zM988 25h1v1h-1zM989 25h1v1h-1zM990 26h1v1h-1zM991 26h1v1h-1zM992 26h1v1h-1zM993 27h1v1h-1zM994 27h1v1h-1zM995 27h1v1h-1z" fill="#d0d0d0"/>
<text x="997" y="34" fill="#c8d0d8" font-size="12.5" font-family="Liberation Sans, sans-serif">11.64</text>
<rect x="3" y="444" width="5" height="1" fill="#a020f0"/>
<rect x="3" y="482" width="5" height="1" fill="#2090e8"/>
<rect x="18" y="444" width="5" height="1" fill="#a020f0"/>
<rect x="18" y="482" width="5" height="1" fill="#2090e8"/>
<rect x="33" y="444" width="5" height="1" fill="#a020f0"/>
<rect x="33" y="482" width="5" height="1" fill="#2090e8"/>
<rect x="48" y="444" width="5" height="1" fill="#a020f0"/>
<rect x="48" y="482" width="5" height="1" fill="#2090e8"/>
<rect x="62" y="444" width="5" height="1" fill="#a020f0"/>
<rect x="62" y="482" width="5" height="1" fill="#2090e8"/>
<rect x="77" y="444" width="5" height="1" fill="#a020f0"/>
<rect x="77" y="482" width="5" height="1" fill="#2090e8"/>
<rect x="92" y="444" width="5" height="1" fill="#a020f0"/>
<rect x="92" y="482" width="5" height="1" fill="#2090e8"/>
<rect x="107" y="444" width="5" height="1" fill="#a020f0"/>
<rect x="107" y="482" width="5" height="1" fill="#2090e8"/>
<rect x="122" y="444" width="5" height="1" fill="#a020f0"/>
<rect x="122" y="482" width="5" height="1" fill="#2090e8"/>
<rect x="136" y="444" width="5" height="1" fill="#a020f0"/>
<rect x="136" y="482" width="5" height="1" fill="#2090e8"/>
<rect x="151" y="444" width="5" height="1" fill="#a020f0"/>
<rect x="151" y="482" width="5" height="1" fill="#2090e8"/>
<rect x="166" y="444" width="5" height="1" fill="#a020f0"/>
<rect x="166" y="482" width="5" height="1" fill="#2090e8"/>
<rect x="181" y="444" width="5" height="1" fill="#a020f0"/>
<rect x="181" y="482" width="5" height="1" fill="#2090e8"/>
<rect x="196" y="444" width="5" height="1" fill="#a020f0"/>
<rect x="196" y="482" width="5" height="1" fill="#2090e8"/>
<rect x="211" y="444" width="5" height="1" fill="#a020f0"/>
<rect x="211" y="482" width="5" height="1" fill="#2090e8"/>
<rect x="225" y="444" width="5" height="1" fill="#a020f0"/>
<rect x="225" y="482" width="5" height="1" fill="#2090e8"/>
<rect x="240" y="444" width="5" height="1" fill="#a020f0"/>
<rect x="240" y="482" width="5" height="1" fill="#2090e8"/>
<rect x="255" y="444" width="5" height="1" fill="#a020f0"/>
<rect x="255" y="482" width="5" height="1" fill="#2090e8"/>
<rect x="270" y="444" width="5" height="1" fill="#a020f0"/>
<rect x="270" y="482" width="5" height="1" fill="#2090e8"/>
<rect x="285" y="444" width="5" height="1" fill="#a020f0"/>
<rect x="285" y="482" width="5" height="1" fill="#2090e8"/>
<rect x="299" y="444" width="5" height="1" fill="#a020f0"/>
<rect x="299" y="482" width="5" height="1" fill="#2090e8"/>
<rect x="314" y="444" width="5" height="1" fill="#a020f0"/>
<rect x="314" y="482" width="5" height="1" fill="#2090e8"/>
<rect x="329" y="444" width="5" height="1" fill="#a020f0"/>
<rect x="329" y="482" width="5" height="1" fill="#2090e8"/>
<rect x="344" y="444" width="5" height="1" fill="#a020f0"/>
<rect x="344" y="482" width="5" height="1" fill="#2090e8"/>
<rect x="359" y="444" width="5" height="1" fill="#a020f0"/>
<rect x="359" y="482" width="5" height="1" fill="#2090e8"/>
<rect x="374" y="444" width="5" height="1" fill="#a020f0"/>
<rect x="374" y="482" width="5" height="1" fill="#2090e8"/>
<rect x="388" y="444" width="5" height="1" fill="#a020f0"/>
<rect x="388" y="482" width="5" height="1" fill="#2090e8"/>
<rect x="403" y="444" width="5" height="1" fill="#a020f0"/>
<rect x="403" y="482" width="5" height="1" fill="#2090e8"/>
<rect x="418" y="444" width="5" height="1" fill="#a020f0"/>
<rect x="418" y="482" width="5" height="1" fill="#2090e8"/>
<rect x="433" y="444" width="5" height="1" fill="#a020f0"/>
<rect x="433" y="482" width="5" height="1" fill="#2090e8"/>
<rect x="448" y="444" width="5" height="1" fill="#a020f0"/>
<rect x="448" y="482" width="5" height="1" fill="#2090e8"/>
<rect x="463" y="444" width="5" height="1" fill="#a020f0"/>
<rect x="463" y="482" width="5" height="1" fill="#2090e8"/>
<rect x="477" y="444" width="5" height="1" fill="#a020f0"/>
<rect x="477" y="482" width="5" height="1" fill="#2090e8"/>
<rect x="492" y="444" width="5" height="1" fill="#a020f0"/>
<rect x="492" y="482" width="5" height="1" fill="#2090e8"/>
<rect x="507" y="444" width="5" height="1" fill="#a020f0"/>
<rect x="507" y="482" width="5" height="1" fill="#2090e8"/>
<rect x="522" y="444" width="5" height="1" fill="#a020f0"/>
<rect x="522" y="482" width="5" height="1" fill="#2090e8"/>
<rect x="537" y="444" width="5" height="1" fill="#a020f0"/>
<rect x="537" y="482" width="5" height="1" fill="#2090e8"/>
<rect x="551" y="444" width="5" height="1" fill="#a020f0"/>
<rect x="551" y="482" width="5" height="1" fill="#2090e8"/>
<rect x="566" y="444" width="5" height="1" fill="#a020f0"/>
<rect x="566" y="482" width="5" height="1" fill="#2090e8"/>
<rect x="581" y="444" width="5" height="1" fill="#a020f0"/>
<rect x="581" y="482" width="5" height="1" fill="#2090e8"/>
<rect x="596" y="444" width="5" height="1" fill="#a020f0"/>
<rect x="596" y="482" width="5" height="1" fill="#2090e8"/>
<rect x="611" y="444" width="5" height="1" fill="#a020f0"/>
<rect x="611" y="482" width="5" height="1" fill="#2090e8"/>
<rect x="626" y="444" width="5" height="1" fill="#a020f0"/>
<rect x="626" y="482" width="5" height="1" fill="#2090e8"/>
<rect x="640" y="444" width="5" height="1" fill="#a020f0"/>
<rect x="640" y="482" width="5" height="1" fill="#2090e8"/>
<rect x="655" y="444" width="5" height="1" fill="#a020f0"/>
<rect x="655" y="482" width="5" height="1" fill="#2090e8"/>
<rect x="670" y="444" width="5" height="1" fill="#a020f0"/>
<rect x="670" y="482" width="5" height="1" fill="#2090e8"/>
<rect x="685" y="444" width="5" height="1" fill="#a020f0"/>
<rect x="685" y="482" width="5" height="1" fill="#2090e8"/>
<rect x="700" y="444" width="5" height="1" fill="#a020f0"/>
<rect x="700" y="482" width="5" height="1" fill="#2090e8"/>
<rect x="715" y="444" width="5" height="1" fill="#a020f0"/>
<rect x="715" y="482" width="5" height="1" fill="#2090e8"/>
<rect x="729" y="444" width="5" height="1" fill="#a020f0"/>
<rect x="729" y="482" width="5" height="1" fill="#2090e8"/>
<rect x="744" y="444" width="5" height="1" fill="#a020f0"/>
<rect x="744" y="482" width="5" height="1" fill="#2090e8"/>
<rect x="759" y="444" width="5" height="1" fill="#a020f0"/>
<rect x="759" y="482" width="5" height="1" fill="#2090e8"/>
<rect x="774" y="444" width="5" height="1" fill="#a020f0"/>
<rect x="774" y="482" width="5" height="1" fill="#2090e8"/>
<rect x="789" y="444" width="5" height="1" fill="#a020f0"/>
<rect x="789" y="482" width="5" height="1" fill="#2090e8"/>
<rect x="803" y="444" width="5" height="1" fill="#a020f0"/>
<rect x="803" y="482" width="5" height="1" fill="#2090e8"/>
<rect x="818" y="444" width="5" height="1" fill="#a020f0"/>
<rect x="818" y="482" width="5" height="1" fill="#2090e8"/>
<rect x="833" y="444" width="5" height="1" fill="#a020f0"/>
<rect x="833" y="482" width="5" height="1" fill="#2090e8"/>
<rect x="848" y="444" width="5" height="1" fill="#a020f0"/>
<rect x="848" y="482" width="5" height="1" fill="#2090e8"/>
<rect x="863" y="444" width="5" height="1" fill="#a020f0"/>
<rect x="863" y="482" width="5" height="1" fill="#2090e8"/>
<rect x="878" y="444" width="5" height="1" fill="#a020f0"/>
<rect x="878" y="482" width="5" height="1" fill="#2090e8"/>
<rect x="892" y="444" width="5" height="1" fill="#a020f0"/>
<rect x="892" y="482" width="5" height="1" fill="#2090e8"/>
<rect x="907" y="444" width="5" height="1" fill="#a020f0"/>
<rect x="907" y="482" width="5" height="1" fill="#2090e8"/>
<rect x="922" y="444" width="5" height="1" fill="#a020f0"/>
<rect x="922" y="482" width="5" height="1" fill="#2090e8"/>
<rect x="937" y="444" width="5" height="1" fill="#a020f0"/>
<rect x="937" y="482" width="5" height="1" fill="#2090e8"/>
<rect x="952" y="444" width="5" height="1" fill="#a020f0"/>
<rect x="952" y="482" width="5" height="1" fill="#2090e8"/>
<rect x="966" y="444" width="5" height="1" fill="#a020f0"/>
<rect x="966" y="482" width="5" height="1" fill="#2090e8"/>
<rect x="981" y="444" width="5" height="1" fill="#a020f0"/>
<rect x="981" y="482" width="5" height="1" fill="#2090e8"/>
<rect x="996" y="444" width="5" height="1" fill="#a020f0"/>
<rect x="996" y="482" width="5" height="1" fill="#2090e8"/>
<rect x="1011" y="444" width="5" height="1" fill="#a020f0"/>
<rect x="1011" y="482" width="5" height="1" fill="#2090e8"/>
<rect x="1026" y="444" width="5" height="1" fill="#a020f0"/>
<rect x="1026" y="482" width="5" height="1" fill="#2090e8"/>
<path d="M1010 411h20v1h-20zM1002 412h28v1h-28zM995 413h16v1h-16zM987 414h16v1h-16zM981 415h15v1h-15zM976 416h12v1h-12zM971 417h11v1h-11zM966 418h11v1h-11zM961 419h11v1h-11zM5 420h5v1h-5zM957 420h10v1h-10zM5 421h13v1h-13zM952 421h10v1h-10zM9 422h15v1h-15zM947 422h11v1h-11zM17 423h12v1h-12zM942 423h11v1h-11zM23 424h11v1h-11zM937 424h11v1h-11zM28 425h10v1h-10zM932 425h11v1h-11zM33 426h8v1h-8zM927 426h11v1h-11zM37 427h7v1h-7zM923 427h10v1h-10zM40 428h7v1h-7zM150 428h27v1h-27zM920 428h8v1h-8zM43 429h7v1h-7zM142 429h50v1h-50zM917 429h7v1h-7zM46 430h8v1h-8zM135 430h16v1h-16zM176 430h27v1h-27zM914 430h7v1h-7zM49 431h9v1h-9zM128 431h15v1h-15zM191 431h20v1h-20zM911 431h7v1h-7zM53 432h10v1h-10zM117 432h19v1h-19zM202 432h34v1h-34zM907 432h8v1h-8zM57 433h72v1h-72zM210 433h37v1h-37zM902 433h10v1h-10zM62 434h56v1h-56zM235 434h20v1h-20zM897 434h11v1h-11zM246 435h16v1h-16zM893 435h10v1h-10zM254 436h16v1h-16zM890 436h8v1h-8zM261 437h20v1h-20zM887 437h7v1h-7zM269 438h23v1h-23zM885 438h6v1h-6zM280 439h19v1h-19zM882 439h6v1h-6zM291 440h14v1h-14zM879 440h7v1h-7zM298 441h12v1h-12zM875 441h8v1h-8zM304 442h11v1h-11zM871 442h9v1h-9zM309 443h10v1h-10zM867 443h9v1h-9zM314 444h9v1h-9zM864 444h8v1h-8zM318 445h9v1h-9zM862 445h6v1h-6zM322 446h9v1h-9zM859 446h6v1h-6zM326 447h8v1h-8zM857 447h6v1h-6zM330 448h6v1h-6zM854 448h6v1h-6zM333 449h6v1h-6zM852 449h6v1h-6zM335 450h6v1h-6zM849 450h6v1h-6zM338 451h6v1h-6zM847 451h6v1h-6zM340 452h6v1h-6zM844 452h6v1h-6zM343 453h6v1h-6zM842 453h6v1h-6zM345 454h6v1h-6zM839 454h6v1h-6zM348 455h5v1h-5zM837 455h6v1h-6zM350 456h5v1h-5zM834 456h6v1h-6zM352 457h5v1h-5zM832 457h6v1h-6zM354 458h5v1h-5zM829 458h6v1h-6zM356 459h5v1h-5zM827 459h6v1h-6zM358 460h6v1h-6zM824 460h6v1h-6zM360 461h6v1h-6zM822 461h6v1h-6zM363 462h6v1h-6zM820 462h5v1h-5zM365 463h6v1h-6zM818 463h5v1h-5zM368 464h6v1h-6zM816 464h5v1h-5zM370 465h6v1h-6zM814 465h5v1h-5zM373 466h6v1h-6zM812 466h5v1h-5zM375 467h7v1h-7zM810 467h5v1h-5zM378 468h6v1h-6zM808 468h5v1h-5zM381 469h6v1h-6zM806 469h5v1h-5zM383 470h7v1h-7zM804 470h5v1h-5zM386 471h7v1h-7zM800 471h7v1h-7zM389 472h7v1h-7zM797 472h8v1h-8zM392 473h7v1h-7zM793 473h8v1h-8zM395 474h7v1h-7zM790 474h8v1h-8zM398 475h7v1h-7zM787 475h7v1h-7zM401 476h7v1h-7zM784 476h7v1h-7zM404 477h6v1h-6zM781 477h7v1h-7zM407 478h6v1h-6zM778 478h7v1h-7zM409 479h6v1h-6zM775 479h7v1h-7zM412 480h6v1h-6zM771 480h8v1h-8zM414 481h6v1h-6zM767 481h9v1h-9zM417 482h6v1h-6zM763 482h9v1h-9zM419 483h8v1h-8zM759 483h9v1h-9zM422 484h9v1h-9zM754 484h10v1h-10zM426 485h9v1h-9zM749 485h11v1h-11zM430 486h9v1h-9zM744 486h11v1h-11zM434 487h10v1h-10zM739 487h11v1h-11zM438 488h11v1h-11zM734 488h11v1h-11zM443 489h11v1h-11zM729 489h11v1h-11zM448 490h11v1h-11zM724 490h11v1h-11zM453 491h11v1h-11zM720 491h10v1h-10zM458 492h10v1h-10zM714 492h11v1h-11zM463 493h9v1h-9zM706 493h15v1h-15zM467 494h8v1h-8zM695 494h20v1h-20zM471 495h8v1h-8zM680 495h27v1h-27zM474 496h9v1h-9zM669 496h27v1h-27zM478 497h10v1h-10zM661 497h20v1h-20zM482 498h11v1h-11zM654 498h16v1h-16zM487 499h27v1h-27zM646 499h16v1h-16zM492 500h30v1h-30zM639 500h16v1h-16zM513 501h20v1h-20zM632 501h15v1h-15zM521 502h119v1h-119zM532 503h101v1h-101z" fill="#ff0000"/>
<path d="M309 401h12v1h-12zM299 402h30v1h-30zM294 403h16v1h-16zM320 403h13v1h-13zM290 404h10v1h-10zM328 404h7v1h-7zM280 405h15v1h-15zM332 405h5v1h-5zM271 406h20v1h-20zM334 406h4v1h-4zM269 407h12v1h-12zM336 407h4v1h-4zM267 408h5v1h-5zM337 408h5v1h-5zM924 408h9v1h-9zM265 409h5v1h-5zM339 409h4v1h-4zM922 409h20v1h-20zM263 410h5v1h-5zM341 410h4v1h-4zM920 410h5v1h-5zM932 410h13v1h-13zM991 410h25v1h-25zM261 411h5v1h-5zM342 411h5v1h-5zM918 411h5v1h-5zM941 411h7v1h-7zM980 411h40v1h-40zM259 412h5v1h-5zM344 412h4v1h-4zM916 412h5v1h-5zM944 412h7v1h-7zM972 412h20v1h-20zM1015 412h9v1h-9zM256 413h6v1h-6zM346 413h4v1h-4zM914 413h5v1h-5zM947 413h7v1h-7zM961 413h20v1h-20zM1019 413h9v1h-9zM254 414h6v1h-6zM347 414h5v1h-5zM912 414h5v1h-5zM950 414h23v1h-23zM1023 414h7v1h-7zM252 415h5v1h-5zM349 415h4v1h-4zM910 415h5v1h-5zM953 415h9v1h-9zM1027 415h3v1h-3zM250 416h5v1h-5zM351 416h4v1h-4zM908 416h5v1h-5zM248 417h5v1h-5zM352 417h5v1h-5zM904 417h7v1h-7zM246 418h5v1h-5zM354 418h4v1h-4zM900 418h9v1h-9zM244 419h5v1h-5zM356 419h4v1h-4zM896 419h9v1h-9zM242 420h5v1h-5zM357 420h5v1h-5zM892 420h9v1h-9zM241 421h4v1h-4zM359 421h5v1h-5zM887 421h10v1h-10zM240 422h3v1h-3zM361 422h7v1h-7zM849 422h10v1h-10zM883 422h10v1h-10zM239 423h3v1h-3zM363 423h9v1h-9zM846 423h42v1h-42zM238 424h3v1h-3zM367 424h9v1h-9zM820 424h4v1h-4zM843 424h7v1h-7zM858 424h26v1h-26zM238 425h2v1h-2zM371 425h9v1h-9zM818 425h11v1h-11zM840 425h7v1h-7zM5 426h18v1h-18zM91 426h8v1h-8zM237 426h3v1h-3zM375 426h9v1h-9zM816 426h5v1h-5zM823 426h11v1h-11zM837 426h7v1h-7zM5 427h22v1h-22zM48 427h25v1h-25zM83 427h24v1h-24zM236 427h3v1h-3zM379 427h10v1h-10zM814 427h5v1h-5zM828 427h13v1h-13zM22 428h9v1h-9zM43 428h49v1h-49zM98 428h13v1h-13zM235 428h3v1h-3zM383 428h9v1h-9zM812 428h5v1h-5zM833 428h5v1h-5zM26 429h9v1h-9zM38 429h11v1h-11zM72 429h12v1h-12zM106 429h7v1h-7zM234 429h3v1h-3zM388 429h6v1h-6zM810 429h5v1h-5zM30 430h14v1h-14zM110 430h4v1h-4zM233 430h3v1h-3zM391 430h4v1h-4zM808 430h5v1h-5zM34 431h5v1h-5zM112 431h4v1h-4zM232 431h3v1h-3zM393 431h4v1h-4zM806 431h5v1h-5zM113 432h4v1h-4zM231 432h3v1h-3zM394 432h4v1h-4zM805 432h4v1h-4zM115 433h4v1h-4zM231 433h2v1h-2zM396 433h4v1h-4zM803 433h4v1h-4zM116 434h4v1h-4zM230 434h3v1h-3zM397 434h4v1h-4zM802 434h4v1h-4zM118 435h4v1h-4zM229 435h3v1h-3zM399 435h4v1h-4zM801 435h3v1h-3zM119 436h4v1h-4zM228 436h3v1h-3zM400 436h4v1h-4zM799 436h4v1h-4zM121 437h4v1h-4zM227 437h3v1h-3zM402 437h4v1h-4zM798 437h4v1h-4zM122 438h4v1h-4zM226 438h3v1h-3zM403 438h5v1h-5zM796 438h4v1h-4zM124 439h4v1h-4zM225 439h3v1h-3zM405 439h5v1h-5zM795 439h4v1h-4zM125 440h4v1h-4zM224 440h3v1h-3zM407 440h6v1h-6zM794 440h3v1h-3zM127 441h3v1h-3zM224 441h2v1h-2zM409 441h6v1h-6zM792 441h4v1h-4zM128 442h4v1h-4zM223 442h3v1h-3zM412 442h6v1h-6zM790 442h5v1h-5zM129 443h4v1h-4zM222 443h3v1h-3zM414 443h6v1h-6zM788 443h5v1h-5zM131 444h4v1h-4zM221 444h3v1h-3zM417 444h5v1h-5zM786 444h5v1h-5zM132 445h4v1h-4zM220 445h3v1h-3zM419 445h5v1h-5zM627 445h9v1h-9zM784 445h5v1h-5zM134 446h3v1h-3zM219 446h3v1h-3zM421 446h5v1h-5zM625 446h35v1h-35zM782 446h5v1h-5zM135 447h4v1h-4zM218 447h3v1h-3zM423 447h5v1h-5zM623 447h5v1h-5zM635 447h28v1h-28zM780 447h5v1h-5zM136 448h4v1h-4zM217 448h3v1h-3zM425 448h5v1h-5zM621 448h5v1h-5zM659 448h7v1h-7zM778 448h5v1h-5zM138 449h4v1h-4zM217 449h2v1h-2zM427 449h5v1h-5zM619 449h5v1h-5zM662 449h7v1h-7zM760 449h21v1h-21zM139 450h5v1h-5zM216 450h3v1h-3zM429 450h5v1h-5zM617 450h5v1h-5zM665 450h7v1h-7zM757 450h22v1h-22zM141 451h5v1h-5zM215 451h3v1h-3zM431 451h5v1h-5zM615 451h5v1h-5zM668 451h7v1h-7zM754 451h7v1h-7zM143 452h5v1h-5zM214 452h3v1h-3zM433 452h5v1h-5zM611 452h7v1h-7zM671 452h7v1h-7zM751 452h7v1h-7zM145 453h5v1h-5zM210 453h6v1h-6zM435 453h6v1h-6zM606 453h10v1h-10zM674 453h7v1h-7zM748 453h7v1h-7zM147 454h5v1h-5zM202 454h13v1h-13zM437 454h7v1h-7zM601 454h11v1h-11zM677 454h7v1h-7zM739 454h13v1h-13zM149 455h5v1h-5zM197 455h14v1h-14zM440 455h7v1h-7zM591 455h16v1h-16zM680 455h7v1h-7zM724 455h25v1h-25zM151 456h5v1h-5zM194 456h9v1h-9zM443 456h7v1h-7zM581 456h21v1h-21zM683 456h57v1h-57zM153 457h7v1h-7zM191 457h7v1h-7zM446 457h7v1h-7zM576 457h16v1h-16zM686 457h39v1h-39zM155 458h9v1h-9zM188 458h7v1h-7zM449 458h7v1h-7zM571 458h11v1h-11zM159 459h9v1h-9zM185 459h7v1h-7zM452 459h7v1h-7zM566 459h11v1h-11zM163 460h26v1h-26zM455 460h7v1h-7zM561 460h11v1h-11zM167 461h19v1h-19zM458 461h7v1h-7zM556 461h11v1h-11zM461 462h7v1h-7zM552 462h10v1h-10zM464 463h6v1h-6zM550 463h7v1h-7zM467 464h5v1h-5zM548 464h5v1h-5zM469 465h6v1h-6zM545 465h6v1h-6zM471 466h6v1h-6zM543 466h6v1h-6zM474 467h5v1h-5zM541 467h5v1h-5zM476 468h6v1h-6zM532 468h12v1h-12zM478 469h8v1h-8zM522 469h20v1h-20zM481 470h9v1h-9zM517 470h16v1h-16zM485 471h9v1h-9zM512 471h11v1h-11zM489 472h29v1h-29zM493 473h20v1h-20z" fill="#00dd00"/>
<path d="M242 324h1v1h-1zM241 325h2v1h-2zM240 326h1v1h-1zM243 326h1v1h-1zM240 327h1v1h-1zM243 327h1v1h-1zM239 328h1v1h-1zM243 328h1v1h-1zM238 329h1v1h-1zM244 329h1v1h-1zM237 330h1v1h-1zM244 330h1v1h-1zM236 331h1v1h-1zM244 331h1v1h-1zM236 332h1v1h-1zM244 332h1v1h-1zM235 333h1v1h-1zM245 333h1v1h-1zM234 334h1v1h-1zM245 334h1v1h-1zM233 335h1v1h-1zM245 335h1v1h-1zM233 336h1v1h-1zM246 336h1v1h-1zM232 337h1v1h-1zM246 337h1v1h-1zM231 338h1v1h-1zM246 338h1v1h-1zM230 339h1v1h-1zM247 339h1v1h-1zM229 340h1v1h-1zM247 340h1v1h-1zM229 341h1v1h-1zM247 341h1v1h-1zM228 342h1v1h-1zM248 342h1v1h-1zM227 343h1v1h-1zM248 343h1v1h-1zM227 344h1v1h-1zM248 344h1v1h-1zM227 345h1v1h-1zM248 345h1v1h-1zM227 346h1v1h-1zM249 346h1v1h-1zM226 347h1v1h-1zM249 347h1v1h-1zM226 348h1v1h-1zM249 348h1v1h-1zM226 349h1v1h-1zM250 349h1v1h-1zM226 350h1v1h-1zM250 350h1v1h-1zM226 351h1v1h-1zM250 351h1v1h-1zM226 352h1v1h-1zM251 352h1v1h-1zM225 353h1v1h-1zM251 353h1v1h-1zM924 353h1v1h-1zM225 354h1v1h-1zM251 354h1v1h-1zM924 354h1v1h-1zM225 355h1v1h-1zM251 355h1v1h-1zM923 355h2v1h-2zM225 356h1v1h-1zM252 356h1v1h-1zM923 356h1v1h-1zM925 356h1v1h-1zM225 357h1v1h-1zM252 357h1v1h-1zM922 357h1v1h-1zM925 357h1v1h-1zM225 358h1v1h-1zM252 358h1v1h-1zM922 358h1v1h-1zM925 358h1v1h-1zM224 359h1v1h-1zM253 359h1v1h-1zM922 359h1v1h-1zM925 359h1v1h-1zM224 360h1v1h-1zM253 360h1v1h-1zM921 360h1v1h-1zM925 360h1v1h-1zM224 361h1v1h-1zM253 361h1v1h-1zM921 361h1v1h-1zM926 361h1v1h-1zM224 362h1v1h-1zM254 362h1v1h-1zM920 362h1v1h-1zM926 362h1v1h-1zM224 363h1v1h-1zM254 363h1v1h-1zM920 363h1v1h-1zM926 363h1v1h-1zM224 364h1v1h-1zM254 364h1v1h-1zM920 364h1v1h-1zM926 364h1v1h-1zM224 365h1v1h-1zM255 365h1v1h-1zM919 365h1v1h-1zM927 365h1v1h-1zM223 366h1v1h-1zM255 366h1v1h-1zM919 366h1v1h-1zM927 366h1v1h-1zM223 367h1v1h-1zM255 367h1v1h-1zM271 367h2v1h-2zM918 367h1v1h-1zM927 367h1v1h-1zM223 368h1v1h-1zM255 368h1v1h-1zM269 368h2v1h-2zM273 368h1v1h-1zM918 368h1v1h-1zM927 368h1v1h-1zM223 369h1v1h-1zM256 369h1v1h-1zM266 369h3v1h-3zM273 369h1v1h-1zM918 369h1v1h-1zM927 369h1v1h-1zM223 370h1v1h-1zM256 370h1v1h-1zM264 370h2v1h-2zM274 370h1v1h-1zM917 370h1v1h-1zM928 370h1v1h-1zM223 371h1v1h-1zM256 371h1v1h-1zM261 371h3v1h-3zM274 371h1v1h-1zM917 371h1v1h-1zM928 371h1v1h-1zM222 372h1v1h-1zM257 372h1v1h-1zM259 372h2v1h-2zM275 372h1v1h-1zM805 372h1v1h-1zM916 372h1v1h-1zM928 372h1v1h-1zM222 373h1v1h-1zM257 373h2v1h-2zM275 373h1v1h-1zM804 373h1v1h-1zM806 373h2v1h-2zM916 373h1v1h-1zM928 373h1v1h-1zM222 374h1v1h-1zM276 374h1v1h-1zM804 374h1v1h-1zM808 374h1v1h-1zM915 374h1v1h-1zM928 374h1v1h-1zM222 375h1v1h-1zM276 375h1v1h-1zM803 375h1v1h-1zM809 375h1v1h-1zM915 375h1v1h-1zM929 375h1v1h-1zM222 376h1v1h-1zM277 376h1v1h-1zM803 376h1v1h-1zM810 376h2v1h-2zM915 376h1v1h-1zM929 376h1v1h-1zM222 377h1v1h-1zM277 377h1v1h-1zM802 377h1v1h-1zM812 377h1v1h-1zM914 377h1v1h-1zM929 377h1v1h-1zM221 378h1v1h-1zM278 378h1v1h-1zM802 378h1v1h-1zM813 378h1v1h-1zM914 378h1v1h-1zM929 378h1v1h-1zM221 379h1v1h-1zM278 379h1v1h-1zM801 379h1v1h-1zM814 379h2v1h-2zM913 379h1v1h-1zM929 379h1v1h-1zM221 380h1v1h-1zM279 380h1v1h-1zM801 380h1v1h-1zM816 380h1v1h-1zM913 380h1v1h-1zM930 380h1v1h-1zM221 381h1v1h-1zM280 381h1v1h-1zM800 381h1v1h-1zM817 381h1v1h-1zM913 381h1v1h-1zM930 381h1v1h-1zM221 382h1v1h-1zM280 382h1v1h-1zM800 382h1v1h-1zM818 382h2v1h-2zM912 382h1v1h-1zM930 382h1v1h-1zM221 383h1v1h-1zM281 383h1v1h-1zM799 383h1v1h-1zM820 383h1v1h-1zM912 383h1v1h-1zM930 383h1v1h-1zM221 384h1v1h-1zM281 384h1v1h-1zM799 384h1v1h-1zM820 384h1v1h-1zM911 384h1v1h-1zM931 384h1v1h-1zM220 385h1v1h-1zM282 385h1v1h-1zM798 385h1v1h-1zM821 385h1v1h-1zM911 385h1v1h-1zM931 385h1v1h-1zM220 386h1v1h-1zM282 386h1v1h-1zM798 386h1v1h-1zM821 386h1v1h-1zM911 386h1v1h-1zM931 386h1v1h-1zM220 387h1v1h-1zM283 387h1v1h-1zM797 387h1v1h-1zM821 387h1v1h-1zM910 387h1v1h-1zM931 387h1v1h-1zM220 388h1v1h-1zM283 388h1v1h-1zM309 388h8v1h-8zM797 388h1v1h-1zM821 388h1v1h-1zM910 388h1v1h-1zM931 388h1v1h-1zM220 389h1v1h-1zM284 389h1v1h-1zM300 389h9v1h-9zM316 389h1v1h-1zM796 389h1v1h-1zM822 389h1v1h-1zM909 389h1v1h-1zM932 389h1v1h-1zM220 390h1v1h-1zM284 390h1v1h-1zM298 390h2v1h-2zM317 390h1v1h-1zM796 390h1v1h-1zM822 390h1v1h-1zM909 390h1v1h-1zM932 390h1v1h-1zM219 391h1v1h-1zM285 391h1v1h-1zM296 391h2v1h-2zM317 391h1v1h-1zM795 391h1v1h-1zM822 391h1v1h-1zM850 391h1v1h-1zM908 391h1v1h-1zM932 391h1v1h-1zM219 392h1v1h-1zM285 392h1v1h-1zM293 392h3v1h-3zM318 392h1v1h-1zM795 392h1v1h-1zM822 392h1v1h-1zM850 392h1v1h-1zM908 392h1v1h-1zM932 392h1v1h-1zM219 393h1v1h-1zM286 393h1v1h-1zM291 393h2v1h-2zM318 393h1v1h-1zM794 393h1v1h-1zM823 393h1v1h-1zM849 393h1v1h-1zM851 393h1v1h-1zM907 393h1v1h-1zM932 393h1v1h-1zM219 394h1v1h-1zM286 394h1v1h-1zM289 394h2v1h-2zM318 394h1v1h-1zM794 394h1v1h-1zM823 394h1v1h-1zM849 394h1v1h-1zM851 394h1v1h-1zM906 394h1v1h-1zM933 394h1v1h-1zM219 395h1v1h-1zM287 395h2v1h-2zM319 395h1v1h-1zM793 395h1v1h-1zM823 395h1v1h-1zM849 395h1v1h-1zM852 395h1v1h-1zM905 395h1v1h-1zM933 395h1v1h-1zM219 396h1v1h-1zM319 396h1v1h-1zM793 396h1v1h-1zM823 396h1v1h-1zM849 396h1v1h-1zM852 396h1v1h-1zM905 396h1v1h-1zM933 396h1v1h-1zM219 397h1v1h-1zM320 397h1v1h-1zM792 397h1v1h-1zM824 397h1v1h-1zM848 397h1v1h-1zM853 397h1v1h-1zM904 397h1v1h-1zM933 397h1v1h-1zM218 398h1v1h-1zM320 398h1v1h-1zM792 398h1v1h-1zM824 398h1v1h-1zM848 398h1v1h-1zM853 398h1v1h-1zM903 398h1v1h-1zM934 398h1v1h-1zM218 399h1v1h-1zM320 399h1v1h-1zM791 399h1v1h-1zM824 399h1v1h-1zM848 399h1v1h-1zM854 399h1v1h-1zM903 399h1v1h-1zM934 399h1v1h-1zM218 400h1v1h-1zM321 400h1v1h-1zM791 400h1v1h-1zM824 400h1v1h-1zM847 400h1v1h-1zM854 400h1v1h-1zM902 400h1v1h-1zM934 400h1v1h-1zM982 400h2v1h-2zM218 401h1v1h-1zM321 401h1v1h-1zM790 401h1v1h-1zM825 401h1v1h-1zM847 401h1v1h-1zM855 401h1v1h-1zM901 401h1v1h-1zM934 401h1v1h-1zM978 401h4v1h-4zM984 401h2v1h-2zM218 402h1v1h-1zM322 402h1v1h-1zM628 402h1v1h-1zM790 402h1v1h-1zM825 402h1v1h-1zM847 402h1v1h-1zM855 402h1v1h-1zM900 402h1v1h-1zM934 402h1v1h-1zM974 402h4v1h-4zM986 402h1v1h-1zM218 403h1v1h-1zM322 403h1v1h-1zM627 403h2v1h-2zM790 403h1v1h-1zM825 403h1v1h-1zM846 403h1v1h-1zM855 403h1v1h-1zM900 403h1v1h-1zM935 403h1v1h-1zM970 403h4v1h-4zM987 403h1v1h-1zM217 404h1v1h-1zM322 404h1v1h-1zM627 404h1v1h-1zM629 404h1v1h-1zM789 404h1v1h-1zM825 404h1v1h-1zM846 404h1v1h-1zM856 404h1v1h-1zM899 404h1v1h-1zM935 404h1v1h-1zM968 404h2v1h-2zM988 404h2v1h-2zM217 405h1v1h-1zM323 405h1v1h-1zM626 405h1v1h-1zM629 405h1v1h-1zM789 405h1v1h-1zM826 405h1v1h-1zM846 405h1v1h-1zM856 405h1v1h-1zM898 405h1v1h-1zM935 405h1v1h-1zM968 405h1v1h-1zM990 405h1v1h-1zM1012 405h2v1h-2zM217 406h1v1h-1zM323 406h1v1h-1zM626 406h1v1h-1zM629 406h1v1h-1zM789 406h1v1h-1zM826 406h1v1h-1zM846 406h1v1h-1zM857 406h1v1h-1zM898 406h1v1h-1zM935 406h1v1h-1zM967 406h1v1h-1zM991 406h1v1h-1zM1010 406h2v1h-2zM1013 406h1v1h-1zM217 407h1v1h-1zM324 407h1v1h-1zM625 407h1v1h-1zM629 407h1v1h-1zM789 407h1v1h-1zM826 407h1v1h-1zM845 407h1v1h-1zM857 407h1v1h-1zM897 407h1v1h-1zM935 407h1v1h-1zM967 407h1v1h-1zM992 407h2v1h-2zM1007 407h3v1h-3zM1014 407h1v1h-1zM217 408h1v1h-1zM324 408h1v1h-1zM625 408h1v1h-1zM630 408h1v1h-1zM788 408h1v1h-1zM826 408h1v1h-1zM845 408h1v1h-1zM858 408h1v1h-1zM896 408h1v1h-1zM936 408h1v1h-1zM967 408h1v1h-1zM994 408h1v1h-1zM1005 408h2v1h-2zM1014 408h1v1h-1zM217 409h1v1h-1zM325 409h1v1h-1zM624 409h1v1h-1zM630 409h1v1h-1zM788 409h1v1h-1zM827 409h1v1h-1zM845 409h1v1h-1zM858 409h1v1h-1zM895 409h1v1h-1zM936 409h1v1h-1zM966 409h1v1h-1zM995 409h1v1h-1zM1002 409h3v1h-3zM1015 409h1v1h-1zM50 410h1v1h-1zM216 410h1v1h-1zM325 410h1v1h-1zM624 410h1v1h-1zM630 410h1v1h-1zM788 410h1v1h-1zM827 410h1v1h-1zM844 410h1v1h-1zM859 410h1v1h-1zM895 410h1v1h-1zM936 410h1v1h-1zM966 410h1v1h-1zM996 410h2v1h-2zM1000 410h2v1h-2zM1015 410h1v1h-1zM50 411h2v1h-2zM216 411h1v1h-1zM325 411h1v1h-1zM623 411h1v1h-1zM630 411h1v1h-1zM787 411h1v1h-1zM827 411h1v1h-1zM844 411h1v1h-1zM859 411h1v1h-1zM894 411h1v1h-1zM936 411h1v1h-1zM965 411h1v1h-1zM998 411h2v1h-2zM1016 411h1v1h-1zM49 412h1v1h-1zM52 412h1v1h-1zM216 412h1v1h-1zM326 412h1v1h-1zM623 412h1v1h-1zM631 412h1v1h-1zM761 412h1v1h-1zM787 412h1v1h-1zM827 412h1v1h-1zM844 412h1v1h-1zM860 412h1v1h-1zM893 412h1v1h-1zM936 412h1v1h-1zM965 412h1v1h-1zM1016 412h1v1h-1zM49 413h1v1h-1zM53 413h1v1h-1zM216 413h1v1h-1zM326 413h1v1h-1zM622 413h1v1h-1zM631 413h1v1h-1zM761 413h1v1h-1zM787 413h1v1h-1zM828 413h1v1h-1zM844 413h1v1h-1zM860 413h1v1h-1zM892 413h1v1h-1zM937 413h1v1h-1zM965 413h1v1h-1zM1017 413h1v1h-1zM49 414h1v1h-1zM54 414h1v1h-1zM216 414h1v1h-1zM327 414h1v1h-1zM622 414h1v1h-1zM631 414h1v1h-1zM760 414h1v1h-1zM762 414h1v1h-1zM786 414h1v1h-1zM828 414h1v1h-1zM843 414h1v1h-1zM860 414h1v1h-1zM892 414h1v1h-1zM937 414h1v1h-1zM964 414h1v1h-1zM1017 414h1v1h-1zM48 415h1v1h-1zM55 415h1v1h-1zM94 415h1v1h-1zM216 415h1v1h-1zM327 415h1v1h-1zM621 415h1v1h-1zM631 415h1v1h-1zM760 415h1v1h-1zM762 415h1v1h-1zM786 415h1v1h-1zM828 415h1v1h-1zM843 415h1v1h-1zM861 415h1v1h-1zM891 415h1v1h-1zM937 415h1v1h-1zM964 415h1v1h-1zM1017 415h1v1h-1zM48 416h1v1h-1zM56 416h1v1h-1zM93 416h1v1h-1zM95 416h1v1h-1zM216 416h1v1h-1zM327 416h1v1h-1zM621 416h1v1h-1zM632 416h1v1h-1zM760 416h1v1h-1zM763 416h1v1h-1zM786 416h1v1h-1zM828 416h1v1h-1zM843 416h1v1h-1zM861 416h1v1h-1zM890 416h1v1h-1zM937 416h1v1h-1zM964 416h1v1h-1zM1018 416h1v1h-1zM48 417h1v1h-1zM57 417h1v1h-1zM93 417h1v1h-1zM95 417h1v1h-1zM215 417h1v1h-1zM328 417h1v1h-1zM620 417h1v1h-1zM632 417h1v1h-1zM759 417h1v1h-1zM763 417h1v1h-1zM785 417h1v1h-1zM829 417h1v1h-1zM842 417h1v1h-1zM862 417h1v1h-1zM889 417h1v1h-1zM938 417h1v1h-1zM963 417h1v1h-1zM1018 417h1v1h-1zM47 418h1v1h-1zM57 418h1v1h-1zM92 418h1v1h-1zM96 418h1v1h-1zM215 418h1v1h-1zM328 418h1v1h-1zM619 418h1v1h-1zM632 418h1v1h-1zM759 418h1v1h-1zM764 418h1v1h-1zM785 418h1v1h-1zM829 418h1v1h-1zM842 418h1v1h-1zM862 418h1v1h-1zM889 418h1v1h-1zM938 418h1v1h-1zM963 418h1v1h-1zM1019 418h1v1h-1zM47 419h1v1h-1zM58 419h1v1h-1zM91 419h1v1h-1zM96 419h1v1h-1zM215 419h1v1h-1zM329 419h1v1h-1zM619 419h1v1h-1zM632 419h1v1h-1zM759 419h1v1h-1zM764 419h1v1h-1zM785 419h1v1h-1zM829 419h1v1h-1zM842 419h1v1h-1zM863 419h1v1h-1zM888 419h1v1h-1zM938 419h1v1h-1zM963 419h1v1h-1zM1019 419h1v1h-1zM47 420h1v1h-1zM59 420h1v1h-1zM90 420h1v1h-1zM97 420h1v1h-1zM215 420h1v1h-1zM329 420h1v1h-1zM618 420h1v1h-1zM633 420h1v1h-1zM758 420h1v1h-1zM764 420h1v1h-1zM785 420h1v1h-1zM829 420h1v1h-1zM841 420h1v1h-1zM863 420h1v1h-1zM887 420h1v1h-1zM938 420h1v1h-1zM962 420h1v1h-1zM1020 420h1v1h-1zM46 421h1v1h-1zM60 421h1v1h-1zM90 421h1v1h-1zM97 421h1v1h-1zM215 421h1v1h-1zM329 421h1v1h-1zM618 421h1v1h-1zM633 421h1v1h-1zM758 421h1v1h-1zM765 421h1v1h-1zM784 421h1v1h-1zM830 421h1v1h-1zM841 421h1v1h-1zM864 421h1v1h-1zM886 421h1v1h-1zM938 421h1v1h-1zM962 421h1v1h-1zM1020 421h1v1h-1zM46 422h1v1h-1zM61 422h1v1h-1zM89 422h1v1h-1zM98 422h1v1h-1zM215 422h1v1h-1zM330 422h1v1h-1zM617 422h1v1h-1zM633 422h1v1h-1zM757 422h1v1h-1zM765 422h1v1h-1zM784 422h1v1h-1zM830 422h1v1h-1zM841 422h1v1h-1zM864 422h1v1h-1zM885 422h1v1h-1zM939 422h1v1h-1zM962 422h1v1h-1zM1021 422h1v1h-1zM46 423h1v1h-1zM62 423h1v1h-1zM88 423h1v1h-1zM99 423h1v1h-1zM214 423h1v1h-1zM330 423h1v1h-1zM617 423h1v1h-1zM633 423h1v1h-1zM757 423h1v1h-1zM766 423h1v1h-1zM784 423h1v1h-1zM830 423h1v1h-1zM841 423h1v1h-1zM865 423h1v1h-1zM885 423h1v1h-1zM939 423h1v1h-1zM961 423h1v1h-1zM1021 423h1v1h-1zM45 424h1v1h-1zM63 424h1v1h-1zM87 424h1v1h-1zM99 424h1v1h-1zM214 424h1v1h-1zM331 424h1v1h-1zM616 424h1v1h-1zM634 424h1v1h-1zM757 424h1v1h-1zM766 424h1v1h-1zM783 424h1v1h-1zM830 424h1v1h-1zM840 424h1v1h-1zM865 424h2v1h-2zM884 424h1v1h-1zM939 424h1v1h-1zM961 424h1v1h-1zM1021 424h1v1h-1zM45 425h1v1h-1zM64 425h1v1h-1zM87 425h1v1h-1zM100 425h1v1h-1zM214 425h1v1h-1zM331 425h1v1h-1zM616 425h1v1h-1zM634 425h1v1h-1zM756 425h1v1h-1zM766 425h1v1h-1zM783 425h1v1h-1zM831 425h1v1h-1zM840 425h1v1h-1zM867 425h3v1h-3zM883 425h1v1h-1zM940 425h1v1h-1zM960 425h1v1h-1zM1022 425h1v1h-1zM45 426h1v1h-1zM65 426h2v1h-2zM86 426h1v1h-1zM100 426h1v1h-1zM198 426h2v1h-2zM214 426h1v1h-1zM331 426h1v1h-1zM615 426h1v1h-1zM634 426h1v1h-1zM756 426h1v1h-1zM767 426h1v1h-1zM783 426h1v1h-1zM831 426h1v1h-1zM840 426h1v1h-1zM870 426h3v1h-3zM882 426h1v1h-1zM941 426h1v1h-1zM960 426h1v1h-1zM1022 426h1v1h-1zM20 427h1v1h-1zM44 427h1v1h-1zM67 427h1v1h-1zM85 427h1v1h-1zM101 427h1v1h-1zM198 427h1v1h-1zM200 427h2v1h-2zM214 427h1v1h-1zM332 427h1v1h-1zM615 427h1v1h-1zM634 427h1v1h-1zM756 427h1v1h-1zM767 427h1v1h-1zM782 427h1v1h-1zM831 427h1v1h-1zM839 427h1v1h-1zM873 427h3v1h-3zM882 427h1v1h-1zM941 427h1v1h-1zM960 427h1v1h-1zM1023 427h1v1h-1zM18 428h2v1h-2zM21 428h1v1h-1zM44 428h1v1h-1zM68 428h2v1h-2zM84 428h1v1h-1zM102 428h1v1h-1zM197 428h1v1h-1zM202 428h3v1h-3zM214 428h1v1h-1zM332 428h1v1h-1zM614 428h1v1h-1zM635 428h1v1h-1zM755 428h1v1h-1zM768 428h1v1h-1zM782 428h1v1h-1zM831 428h1v1h-1zM839 428h1v1h-1zM876 428h3v1h-3zM881 428h1v1h-1zM942 428h1v1h-1zM959 428h1v1h-1zM1023 428h1v1h-1zM17 429h1v1h-1zM21 429h1v1h-1zM44 429h1v1h-1zM70 429h1v1h-1zM84 429h1v1h-1zM102 429h1v1h-1zM197 429h1v1h-1zM205 429h2v1h-2zM213 429h1v1h-1zM333 429h1v1h-1zM614 429h1v1h-1zM635 429h1v1h-1zM755 429h1v1h-1zM768 429h1v1h-1zM782 429h1v1h-1zM832 429h1v1h-1zM839 429h1v1h-1zM879 429h2v1h-2zM943 429h1v1h-1zM959 429h1v1h-1zM1024 429h1v1h-1zM16 430h1v1h-1zM22 430h1v1h-1zM43 430h1v1h-1zM71 430h2v1h-2zM83 430h1v1h-1zM103 430h1v1h-1zM197 430h1v1h-1zM207 430h3v1h-3zM213 430h1v1h-1zM333 430h1v1h-1zM613 430h1v1h-1zM635 430h1v1h-1zM755 430h1v1h-1zM769 430h1v1h-1zM782 430h1v1h-1zM832 430h1v1h-1zM839 430h1v1h-1zM944 430h1v1h-1zM959 430h1v1h-1zM1024 430h1v1h-1zM14 431h2v1h-2zM22 431h1v1h-1zM43 431h1v1h-1zM73 431h1v1h-1zM82 431h1v1h-1zM103 431h1v1h-1zM196 431h1v1h-1zM210 431h2v1h-2zM213 431h1v1h-1zM333 431h1v1h-1zM612 431h1v1h-1zM635 431h1v1h-1zM754 431h1v1h-1zM769 431h1v1h-1zM781 431h1v1h-1zM832 431h1v1h-1zM838 431h1v1h-1zM945 431h1v1h-1zM958 431h1v1h-1zM1024 431h1v1h-1zM13 432h1v1h-1zM23 432h1v1h-1zM43 432h1v1h-1zM74 432h2v1h-2zM81 432h1v1h-1zM104 432h1v1h-1zM196 432h1v1h-1zM212 432h2v1h-2zM334 432h1v1h-1zM583 432h1v1h-1zM611 432h1v1h-1zM636 432h1v1h-1zM754 432h1v1h-1zM769 432h1v1h-1zM781 432h1v1h-1zM832 432h1v1h-1zM838 432h1v1h-1zM945 432h1v1h-1zM958 432h1v1h-1zM1025 432h1v1h-1zM12 433h1v1h-1zM23 433h1v1h-1zM42 433h1v1h-1zM76 433h1v1h-1zM81 433h1v1h-1zM104 433h1v1h-1zM196 433h1v1h-1zM334 433h1v1h-1zM582 433h1v1h-1zM584 433h1v1h-1zM610 433h1v1h-1zM636 433h1v1h-1zM754 433h1v1h-1zM770 433h1v1h-1zM781 433h1v1h-1zM833 433h1v1h-1zM838 433h1v1h-1zM946 433h1v1h-1zM958 433h1v1h-1zM1025 433h1v1h-1zM10 434h2v1h-2zM24 434h1v1h-1zM42 434h1v1h-1zM77 434h2v1h-2zM80 434h1v1h-1zM105 434h1v1h-1zM195 434h1v1h-1zM335 434h1v1h-1zM580 434h2v1h-2zM585 434h1v1h-1zM609 434h1v1h-1zM636 434h1v1h-1zM753 434h1v1h-1zM770 434h1v1h-1zM780 434h1v1h-1zM833 434h1v1h-1zM837 434h1v1h-1zM947 434h1v1h-1zM957 434h1v1h-1zM1026 434h1v1h-1zM9 435h1v1h-1zM24 435h1v1h-1zM42 435h1v1h-1zM79 435h1v1h-1zM106 435h1v1h-1zM195 435h1v1h-1zM335 435h1v1h-1zM579 435h1v1h-1zM586 435h1v1h-1zM609 435h1v1h-1zM636 435h1v1h-1zM753 435h1v1h-1zM771 435h1v1h-1zM780 435h1v1h-1zM833 435h1v1h-1zM837 435h1v1h-1zM948 435h1v1h-1zM957 435h1v1h-1zM1026 435h1v1h-1zM8 436h1v1h-1zM25 436h1v1h-1zM41 436h1v1h-1zM106 436h1v1h-1zM194 436h1v1h-1zM335 436h1v1h-1zM578 436h1v1h-1zM587 436h1v1h-1zM608 436h1v1h-1zM637 436h1v1h-1zM752 436h1v1h-1zM771 436h1v1h-1zM780 436h1v1h-1zM833 436h1v1h-1zM837 436h1v1h-1zM948 436h1v1h-1zM957 436h1v1h-1zM1027 436h1v1h-1zM6 437h2v1h-2zM25 437h1v1h-1zM41 437h1v1h-1zM107 437h1v1h-1zM194 437h1v1h-1zM336 437h1v1h-1zM577 437h1v1h-1zM588 437h1v1h-1zM607 437h1v1h-1zM637 437h1v1h-1zM752 437h1v1h-1zM771 437h1v1h-1zM779 437h1v1h-1zM834 437h1v1h-1zM836 437h1v1h-1zM949 437h1v1h-1zM956 437h1v1h-1zM1027 437h1v1h-1zM5 438h1v1h-1zM26 438h1v1h-1zM41 438h1v1h-1zM107 438h1v1h-1zM194 438h1v1h-1zM336 438h1v1h-1zM575 438h2v1h-2zM589 438h1v1h-1zM606 438h1v1h-1zM637 438h1v1h-1zM752 438h1v1h-1zM772 438h1v1h-1zM779 438h1v1h-1zM834 438h1v1h-1zM836 438h1v1h-1zM950 438h1v1h-1zM956 438h1v1h-1zM1028 438h1v1h-1zM26 439h1v1h-1zM40 439h1v1h-1zM108 439h1v1h-1zM193 439h1v1h-1zM337 439h1v1h-1zM574 439h1v1h-1zM590 439h1v1h-1zM605 439h1v1h-1zM637 439h1v1h-1zM751 439h1v1h-1zM772 439h1v1h-1zM779 439h1v1h-1zM834 439h1v1h-1zM836 439h1v1h-1zM951 439h1v1h-1zM955 439h1v1h-1zM1028 439h1v1h-1zM27 440h1v1h-1zM40 440h1v1h-1zM108 440h1v1h-1zM193 440h1v1h-1zM337 440h1v1h-1zM573 440h1v1h-1zM591 440h1v1h-1zM604 440h1v1h-1zM638 440h1v1h-1zM751 440h1v1h-1zM773 440h1v1h-1zM778 440h1v1h-1zM834 440h1v1h-1zM836 440h1v1h-1zM952 440h1v1h-1zM955 440h1v1h-1zM28 441h1v1h-1zM40 441h1v1h-1zM109 441h1v1h-1zM193 441h1v1h-1zM337 441h1v1h-1zM572 441h1v1h-1zM592 441h1v1h-1zM603 441h1v1h-1zM638 441h1v1h-1zM751 441h1v1h-1zM773 441h1v1h-1zM778 441h1v1h-1zM835 441h1v1h-1zM952 441h1v1h-1zM955 441h1v1h-1zM28 442h1v1h-1zM39 442h1v1h-1zM109 442h1v1h-1zM192 442h1v1h-1zM338 442h1v1h-1zM553 442h4v1h-4zM570 442h2v1h-2zM593 442h1v1h-1zM602 442h1v1h-1zM638 442h1v1h-1zM750 442h1v1h-1zM774 442h1v1h-1zM778 442h1v1h-1zM835 442h1v1h-1zM953 442h2v1h-2zM29 443h1v1h-1zM39 443h1v1h-1zM109 443h1v1h-1zM192 443h1v1h-1zM338 443h1v1h-1zM552 443h1v1h-1zM557 443h8v1h-8zM569 443h1v1h-1zM594 443h1v1h-1zM602 443h1v1h-1zM638 443h1v1h-1zM750 443h1v1h-1zM774 443h1v1h-1zM778 443h1v1h-1zM954 443h1v1h-1zM29 444h1v1h-1zM39 444h1v1h-1zM110 444h1v1h-1zM192 444h1v1h-1zM339 444h1v1h-1zM551 444h1v1h-1zM565 444h4v1h-4zM595 444h1v1h-1zM601 444h1v1h-1zM639 444h1v1h-1zM750 444h1v1h-1zM774 444h1v1h-1zM777 444h1v1h-1zM30 445h1v1h-1zM38 445h1v1h-1zM110 445h1v1h-1zM191 445h1v1h-1zM339 445h1v1h-1zM550 445h1v1h-1zM596 445h1v1h-1zM600 445h1v1h-1zM639 445h1v1h-1zM749 445h1v1h-1zM775 445h1v1h-1zM777 445h1v1h-1zM30 446h1v1h-1zM38 446h1v1h-1zM110 446h1v1h-1zM191 446h1v1h-1zM340 446h1v1h-1zM549 446h1v1h-1zM597 446h1v1h-1zM599 446h1v1h-1zM639 446h1v1h-1zM749 446h1v1h-1zM775 446h1v1h-1zM777 446h1v1h-1zM31 447h1v1h-1zM38 447h1v1h-1zM110 447h1v1h-1zM191 447h1v1h-1zM340 447h1v1h-1zM548 447h1v1h-1zM598 447h1v1h-1zM639 447h1v1h-1zM749 447h1v1h-1zM776 447h1v1h-1zM31 448h1v1h-1zM37 448h1v1h-1zM111 448h1v1h-1zM190 448h1v1h-1zM340 448h1v1h-1zM547 448h1v1h-1zM640 448h1v1h-1zM657 448h1v1h-1zM748 448h1v1h-1zM776 448h1v1h-1zM32 449h1v1h-1zM37 449h1v1h-1zM111 449h1v1h-1zM190 449h1v1h-1zM341 449h1v1h-1zM546 449h1v1h-1zM640 449h1v1h-1zM655 449h3v1h-3zM748 449h1v1h-1zM32 450h1v1h-1zM37 450h1v1h-1zM111 450h1v1h-1zM189 450h1v1h-1zM341 450h1v1h-1zM546 450h1v1h-1zM640 450h1v1h-1zM654 450h1v1h-1zM658 450h1v1h-1zM747 450h1v1h-1zM33 451h1v1h-1zM36 451h1v1h-1zM111 451h1v1h-1zM189 451h1v1h-1zM342 451h1v1h-1zM545 451h1v1h-1zM640 451h1v1h-1zM652 451h2v1h-2zM658 451h1v1h-1zM747 451h1v1h-1zM33 452h1v1h-1zM36 452h1v1h-1zM112 452h1v1h-1zM189 452h1v1h-1zM342 452h1v1h-1zM544 452h1v1h-1zM641 452h1v1h-1zM651 452h1v1h-1zM659 452h1v1h-1zM747 452h1v1h-1zM34 453h1v1h-1zM36 453h1v1h-1zM112 453h1v1h-1zM188 453h1v1h-1zM342 453h1v1h-1zM387 453h4v1h-4zM543 453h1v1h-1zM641 453h1v1h-1zM649 453h2v1h-2zM659 453h1v1h-1zM746 453h1v1h-1zM34 454h2v1h-2zM112 454h1v1h-1zM188 454h1v1h-1zM343 454h1v1h-1zM380 454h7v1h-7zM390 454h1v1h-1zM524 454h3v1h-3zM542 454h1v1h-1zM641 454h1v1h-1zM648 454h1v1h-1zM660 454h1v1h-1zM702 454h1v1h-1zM731 454h16v1h-16zM35 455h1v1h-1zM112 455h1v1h-1zM188 455h1v1h-1zM343 455h1v1h-1zM376 455h4v1h-4zM391 455h1v1h-1zM523 455h1v1h-1zM527 455h5v1h-5zM541 455h1v1h-1zM641 455h1v1h-1zM646 455h2v1h-2zM660 455h1v1h-1zM702 455h3v1h-3zM729 455h2v1h-2zM112 456h1v1h-1zM187 456h1v1h-1zM344 456h1v1h-1zM375 456h1v1h-1zM391 456h1v1h-1zM522 456h1v1h-1zM532 456h5v1h-5zM540 456h1v1h-1zM642 456h1v1h-1zM645 456h1v1h-1zM661 456h1v1h-1zM701 456h1v1h-1zM705 456h2v1h-2zM727 456h2v1h-2zM113 457h1v1h-1zM187 457h1v1h-1zM344 457h1v1h-1zM374 457h1v1h-1zM391 457h1v1h-1zM521 457h1v1h-1zM537 457h3v1h-3zM642 457h3v1h-3zM661 457h1v1h-1zM701 457h1v1h-1zM707 457h2v1h-2zM725 457h2v1h-2zM113 458h1v1h-1zM187 458h1v1h-1zM344 458h1v1h-1zM373 458h1v1h-1zM392 458h1v1h-1zM520 458h1v1h-1zM642 458h1v1h-1zM662 458h1v1h-1zM700 458h1v1h-1zM709 458h2v1h-2zM724 458h1v1h-1zM113 459h1v1h-1zM186 459h1v1h-1zM345 459h1v1h-1zM372 459h1v1h-1zM392 459h1v1h-1zM519 459h1v1h-1zM662 459h1v1h-1zM700 459h1v1h-1zM711 459h2v1h-2zM722 459h2v1h-2zM113 460h1v1h-1zM186 460h1v1h-1zM345 460h1v1h-1zM371 460h1v1h-1zM392 460h1v1h-1zM518 460h1v1h-1zM663 460h1v1h-1zM699 460h1v1h-1zM713 460h2v1h-2zM720 460h2v1h-2zM114 461h1v1h-1zM186 461h1v1h-1zM346 461h1v1h-1zM370 461h1v1h-1zM393 461h1v1h-1zM517 461h1v1h-1zM663 461h1v1h-1zM699 461h1v1h-1zM715 461h2v1h-2zM718 461h2v1h-2zM114 462h1v1h-1zM185 462h1v1h-1zM346 462h2v1h-2zM368 462h2v1h-2zM393 462h1v1h-1zM517 462h1v1h-1zM664 462h1v1h-1zM698 462h1v1h-1zM717 462h1v1h-1zM114 463h1v1h-1zM185 463h1v1h-1zM348 463h2v1h-2zM367 463h1v1h-1zM393 463h1v1h-1zM516 463h1v1h-1zM664 463h1v1h-1zM698 463h1v1h-1zM114 464h1v1h-1zM184 464h1v1h-1zM350 464h2v1h-2zM366 464h1v1h-1zM394 464h1v1h-1zM515 464h1v1h-1zM665 464h1v1h-1zM698 464h1v1h-1zM115 465h1v1h-1zM184 465h1v1h-1zM352 465h2v1h-2zM365 465h1v1h-1zM394 465h1v1h-1zM514 465h1v1h-1zM665 465h1v1h-1zM697 465h1v1h-1zM115 466h1v1h-1zM184 466h1v1h-1zM354 466h2v1h-2zM364 466h1v1h-1zM394 466h1v1h-1zM513 466h1v1h-1zM666 466h1v1h-1zM697 466h1v1h-1zM115 467h1v1h-1zM183 467h1v1h-1zM356 467h2v1h-2zM363 467h1v1h-1zM395 467h1v1h-1zM512 467h1v1h-1zM666 467h1v1h-1zM696 467h1v1h-1zM115 468h1v1h-1zM183 468h1v1h-1zM358 468h2v1h-2zM362 468h1v1h-1zM395 468h1v1h-1zM511 468h1v1h-1zM667 468h1v1h-1zM696 468h1v1h-1zM115 469h1v1h-1zM182 469h1v1h-1zM360 469h2v1h-2zM395 469h1v1h-1zM510 469h1v1h-1zM667 469h1v1h-1zM695 469h1v1h-1zM116 470h1v1h-1zM181 470h1v1h-1zM396 470h1v1h-1zM509 470h1v1h-1zM668 470h1v1h-1zM695 470h1v1h-1zM116 471h1v1h-1zM180 471h1v1h-1zM396 471h1v1h-1zM509 471h1v1h-1zM668 471h1v1h-1zM695 471h1v1h-1zM116 472h1v1h-1zM179 472h1v1h-1zM396 472h1v1h-1zM508 472h1v1h-1zM669 472h1v1h-1zM694 472h1v1h-1zM116 473h1v1h-1zM178 473h1v1h-1zM397 473h1v1h-1zM508 473h1v1h-1zM669 473h1v1h-1zM694 473h1v1h-1zM117 474h1v1h-1zM177 474h1v1h-1zM397 474h1v1h-1zM507 474h1v1h-1zM670 474h1v1h-1zM693 474h1v1h-1zM117 475h1v1h-1zM175 475h2v1h-2zM398 475h1v1h-1zM507 475h1v1h-1zM670 475h1v1h-1zM693 475h1v1h-1zM117 476h1v1h-1zM174 476h1v1h-1zM398 476h1v1h-1zM506 476h1v1h-1zM671 476h1v1h-1zM692 476h1v1h-1zM117 477h1v1h-1zM173 477h1v1h-1zM398 477h1v1h-1zM506 477h1v1h-1zM671 477h1v1h-1zM692 477h1v1h-1zM118 478h1v1h-1zM172 478h1v1h-1zM399 478h1v1h-1zM505 478h1v1h-1zM672 478h1v1h-1zM691 478h1v1h-1zM118 479h1v1h-1zM171 479h1v1h-1zM399 479h1v1h-1zM505 479h1v1h-1zM672 479h1v1h-1zM691 479h1v1h-1zM118 480h1v1h-1zM170 480h1v1h-1zM399 480h1v1h-1zM450 480h1v1h-1zM504 480h1v1h-1zM673 480h2v1h-2zM691 480h1v1h-1zM118 481h1v1h-1zM169 481h1v1h-1zM400 481h1v1h-1zM449 481h1v1h-1zM451 481h2v1h-2zM504 481h1v1h-1zM675 481h2v1h-2zM690 481h1v1h-1zM118 482h1v1h-1zM168 482h1v1h-1zM400 482h1v1h-1zM448 482h1v1h-1zM453 482h1v1h-1zM503 482h1v1h-1zM677 482h1v1h-1zM690 482h1v1h-1zM119 483h1v1h-1zM167 483h1v1h-1zM400 483h1v1h-1zM447 483h1v1h-1zM454 483h1v1h-1zM503 483h1v1h-1zM678 483h2v1h-2zM689 483h1v1h-1zM119 484h1v1h-1zM167 484h1v1h-1zM401 484h1v1h-1zM446 484h1v1h-1zM455 484h2v1h-2zM502 484h1v1h-1zM680 484h2v1h-2zM689 484h1v1h-1zM119 485h1v1h-1zM166 485h1v1h-1zM401 485h1v1h-1zM445 485h1v1h-1zM457 485h1v1h-1zM502 485h1v1h-1zM682 485h1v1h-1zM688 485h1v1h-1zM119 486h1v1h-1zM165 486h1v1h-1zM401 486h1v1h-1zM444 486h1v1h-1zM458 486h1v1h-1zM501 486h1v1h-1zM683 486h2v1h-2zM688 486h1v1h-1zM120 487h1v1h-1zM164 487h1v1h-1zM402 487h1v1h-1zM442 487h2v1h-2zM459 487h2v1h-2zM501 487h1v1h-1zM685 487h3v1h-3zM120 488h1v1h-1zM164 488h1v1h-1zM402 488h1v1h-1zM441 488h1v1h-1zM461 488h1v1h-1zM500 488h1v1h-1zM687 488h1v1h-1zM120 489h1v1h-1zM163 489h1v1h-1zM402 489h1v1h-1zM440 489h1v1h-1zM462 489h1v1h-1zM500 489h1v1h-1zM120 490h1v1h-1zM162 490h1v1h-1zM403 490h1v1h-1zM419 490h3v1h-3zM439 490h1v1h-1zM463 490h2v1h-2zM499 490h1v1h-1zM121 491h1v1h-1zM162 491h1v1h-1zM403 491h1v1h-1zM417 491h2v1h-2zM422 491h4v1h-4zM438 491h1v1h-1zM465 491h1v1h-1zM499 491h1v1h-1zM121 492h1v1h-1zM161 492h1v1h-1zM403 492h1v1h-1zM415 492h2v1h-2zM426 492h4v1h-4zM437 492h1v1h-1zM466 492h1v1h-1zM498 492h1v1h-1zM121 493h1v1h-1zM160 493h1v1h-1zM404 493h1v1h-1zM413 493h2v1h-2zM430 493h4v1h-4zM436 493h1v1h-1zM467 493h1v1h-1zM498 493h1v1h-1zM121 494h1v1h-1zM159 494h1v1h-1zM404 494h1v1h-1zM411 494h2v1h-2zM434 494h2v1h-2zM468 494h1v1h-1zM497 494h1v1h-1zM121 495h1v1h-1zM159 495h1v1h-1zM404 495h1v1h-1zM409 495h2v1h-2zM469 495h1v1h-1zM497 495h1v1h-1zM122 496h1v1h-1zM158 496h1v1h-1zM405 496h1v1h-1zM407 496h2v1h-2zM469 496h1v1h-1zM496 496h1v1h-1zM122 497h1v1h-1zM157 497h1v1h-1zM405 497h2v1h-2zM470 497h1v1h-1zM496 497h1v1h-1zM122 498h1v1h-1zM157 498h1v1h-1zM471 498h1v1h-1zM495 498h1v1h-1zM122 499h1v1h-1zM156 499h1v1h-1zM472 499h1v1h-1zM495 499h1v1h-1zM123 500h1v1h-1zM155 500h1v1h-1zM473 500h1v1h-1zM493 500h2v1h-2zM123 501h1v1h-1zM154 501h1v1h-1zM474 501h1v1h-1zM491 501h2v1h-2zM123 502h1v1h-1zM154 502h1v1h-1zM475 502h1v1h-1zM489 502h2v1h-2zM123 503h1v1h-1zM146 503h8v1h-8zM476 503h1v1h-1zM487 503h2v1h-2zM124 504h1v1h-1zM135 504h11v1h-11zM476 504h1v1h-1zM485 504h2v1h-2zM124 505h1v1h-1zM128 505h7v1h-7zM477 505h1v1h-1zM483 505h2v1h-2zM124 506h4v1h-4zM478 506h1v1h-1zM481 506h2v1h-2zM479 507h2v1h-2z" fill="#ffffff"/>
<path d="M21.5 428.7 L16.5 434.7 L26.5 434.7 Z" fill="#ff0000"/>
<rect x="20.0" y="434.7" width="3" height="6" fill="#ff0000"/>
<path d="M51.5 429.7 L46.5 435.7 L56.5 435.7 Z" fill="#ff0000"/>
<rect x="50.0" y="435.7" width="3" height="6" fill="#ff0000"/>
<path d="M184.5 462.0 L179.5 468.0 L189.5 468.0 Z" fill="#ff0000"/>
<rect x="183.0" y="468.0" width="3" height="6" fill="#ff0000"/>
<path d="M317.5 403.2 L312.5 409.2 L322.5 409.2 Z" fill="#ff0000"/>
<rect x="316.0" y="409.2" width="3" height="6" fill="#ff0000"/>
<path d="M510.5 473.6 L505.5 479.6 L515.5 479.6 Z" fill="#ff0000"/>
<rect x="509.0" y="479.6" width="3" height="6" fill="#ff0000"/>
<path d="M703.5 457.8 L698.5 463.8 L708.5 463.8 Z" fill="#ff0000"/>
<rect x="702.0" y="463.8" width="3" height="6" fill="#ff0000"/>
<path d="M732.5 457.8 L727.5 463.8 L737.5 463.8 Z" fill="#ff0000"/>
<rect x="731.0" y="463.8" width="3" height="6" fill="#ff0000"/>
<path d="M792.5 443.8 L787.5 449.8 L797.5 449.8 Z" fill="#ff0000"/>
<rect x="791.0" y="449.8" width="3" height="6" fill="#ff0000"/>
<path d="M851.5 424.8 L846.5 430.8 L856.5 430.8 Z" fill="#ff0000"/>
<rect x="850.0" y="430.8" width="3" height="6" fill="#ff0000"/>
<path d="M895.5 423.0 L890.5 429.0 L900.5 429.0 Z" fill="#ff0000"/>
<rect x="894.0" y="429.0" width="3" height="6" fill="#ff0000"/>
<path d="M969.5 416.0 L964.5 422.0 L974.5 422.0 Z" fill="#ff0000"/>
<rect x="968.0" y="422.0" width="3" height="6" fill="#ff0000"/>
<circle cx="703.0" cy="449.9" r="6.9" fill="url(#cg)"/>
<rect x="698" y="449" width="10" height="2" fill="#ff1010"/>
<rect x="702" y="445" width="2" height="10" fill="#ff1010"/>
<circle cx="732.0" cy="450.0" r="6.9" fill="url(#cg)"/>
<rect x="727" y="449" width="10" height="2" fill="#ff1010"/>
<rect x="731" y="445" width="2" height="10" fill="#ff1010"/>
<circle cx="792.0" cy="435.0" r="6.9" fill="url(#cg)"/>
<rect x="787" y="434" width="10" height="2" fill="#ff1010"/>
<rect x="791" y="430" width="2" height="10" fill="#ff1010"/>
<circle cx="851.0" cy="413.0" r="6.9" fill="url(#cg)"/>
<rect x="846" y="412" width="10" height="2" fill="#ff1010"/>
<rect x="850" y="408" width="2" height="10" fill="#ff1010"/>
<circle cx="895.0" cy="412.0" r="6.9" fill="url(#cg)"/>
<rect x="890" y="411" width="10" height="2" fill="#ff1010"/>
<rect x="894" y="407" width="2" height="10" fill="#ff1010"/>
<circle cx="969.0" cy="404.1" r="6.9" fill="url(#cg)"/>
<rect x="964" y="403" width="10" height="2" fill="#ff1010"/>
<rect x="968" y="399" width="2" height="10" fill="#ff1010"/>
</svg>
<div class="t" style="left:2px;top:3px;color:#c8c8c8"><span class="cj">深物业</span>A (<span class="cj">日线</span>)</div>
<div class="ic" style="left:86px;top:4px"></div>
<div class="t" style="left:103px;top:3px;color:#e8e8e8">MA5: 11.00</div>
<div class="t" style="left:173px;top:3px;color:#e8e800">MA10: 10.70</div>
<div class="t" style="left:250px;top:3px;color:#e800e8">MA20: 10.13</div>
<div class="t" style="left:326px;top:3px;color:#00e800">MA60: 9.56</div>
<div class="ic" style="left:1px;top:305px"></div>
<div class="t" style="left:17px;top:304px;color:#e0e0e0"><span class="cj">三线双金叉共</span>F</div>
<div class="t" style="left:100px;top:304px;font-size:12px;color:#e8e8e8">RSI1: 52.64</div>
<div class="t" style="left:169px;top:304px;font-size:12px;color:#e8e8e8">RSI2: 52.64</div>
<div class="t" style="left:238px;top:304px;font-size:12px;color:#e8e8e8">RSI3: 52.64</div>
<div class="t" style="left:307px;top:304px;font-size:12px;color:#00c000">RSI4: 61.08</div>
<div class="t" style="left:376px;top:304px;font-size:12px;color:#ff2020">WR1: 62.55</div>
<div class="t" style="left:0px;top:495px;color:#8a8a8a"><span class="cj">用到未来数据</span></div>
<div class="bx" style="left:932px;top:288px;background:#84460e">榜</div>
<div class="bx" style="left:961px;top:288px;background:#7e0808">涨</div>
<div class="bx" style="left:991px;top:288px;background:#0b366c">财</div>
</div></body></html>
